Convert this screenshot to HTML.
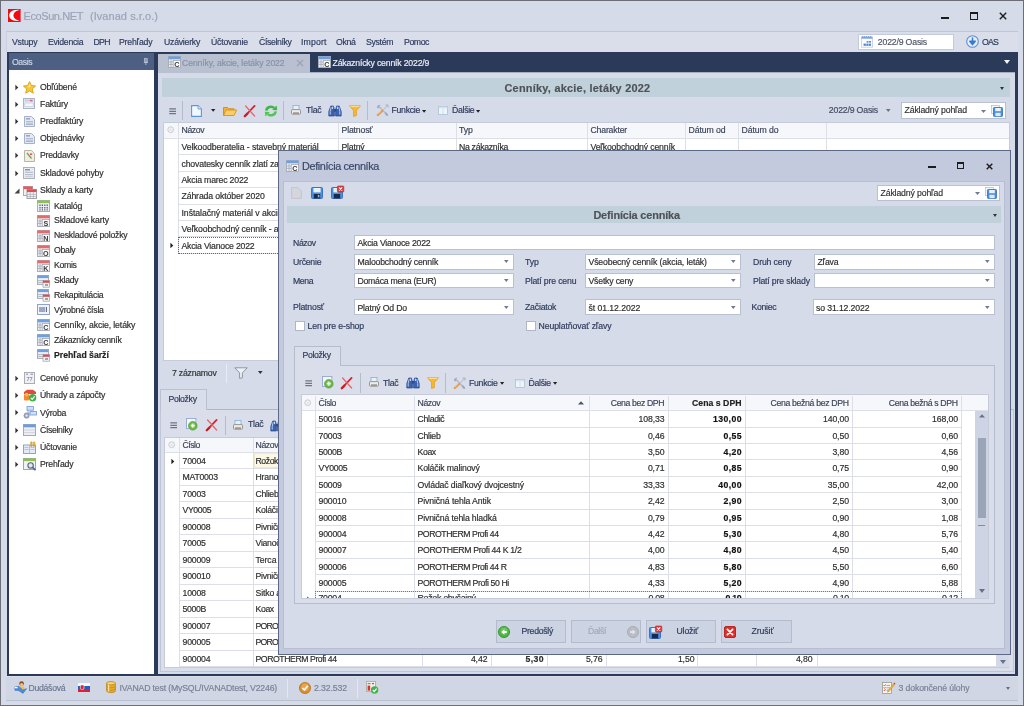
<!DOCTYPE html>
<html><head><meta charset="utf-8"><title>EcoSun.NET</title>
<style>
html,body{margin:0;padding:0;background:#d5dbe8;}
body{width:1024px;height:706px;overflow:hidden;font-family:"Liberation Sans",sans-serif;}
#w{filter:blur(0.35px);position:relative;width:1024px;height:706px;overflow:hidden;background:#d5dbe8;font-size:8.8px;letter-spacing:-0.28px;color:#2e2e2e;}
.b{position:absolute;box-sizing:border-box;}
.t{position:absolute;white-space:pre;-webkit-text-stroke:0.18px;}
.i{position:absolute;overflow:visible;}
.bold{font-weight:bold;}
.hd{color:#3d4459;}
.in{background:#fff;border:1px solid #b9c0d1;}
.btn{background:#ccd3e3;border:1px solid #b3bbcc;}

</style></head><body>
<div id="w">
<div class="b " style="left:0px;top:0px;width:1024px;height:706px;border:1px solid #6d6e76;background:#d5dbe8"></div>
<svg class="i" style="left:8px;top:9px" width="13" height="13" viewBox="0 0 13 13"><rect x="0" y="0" width="12.6" height="13" fill="#f00a14"/><path d="M11.6 0.9 C4.5 0.2 0.9 3.6 1.1 6.6 C1.3 9.8 4.6 12.6 11.8 11.8 C7.6 10.8 5.4 9 5.4 6.4 C5.4 3.8 7.4 1.8 11.6 0.9Z" fill="#fff"/></svg>
<div class="t " style="left:23.5px;top:7.9px;font-size:11px;letter-spacing:-0.409px;height:16.2px;line-height:16.2px;color:#9ba3b7">EcoSun.NET</div>
<div class="t " style="left:90px;top:7.9px;font-size:11px;letter-spacing:0.05px;height:16.2px;line-height:16.2px;color:#9ba3b7">(Ivanad s.r.o.)</div>
<div class="b " style="left:941px;top:17px;width:8.4px;height:2.3px;background:#1c1c1c"></div>
<div class="b " style="left:969.5px;top:12px;width:8.5px;height:8px;border:1px solid #1c1c1c;border-top:2px solid #1c1c1c"></div>
<svg class="i" style="left:999px;top:12px" width="8" height="8" viewBox="0 0 8 8"><path d="M0.8 0.8L7.2 7.2M7.2 0.8L0.8 7.2" stroke="#1c1c1c" stroke-width="1.4"/></svg>
<div class="b " style="left:6px;top:31px;width:1012px;height:21px;background:#d9deea;border-top:1px solid #bfc6d4;border-left:1px solid #c9cfdc"></div>
<div class="t " style="left:12px;top:35.8px;font-size:8.7px;letter-spacing:-0.19px;height:12.8px;line-height:12.8px;color:#2f3b5c">Vstupy</div>
<div class="t " style="left:48px;top:35.8px;font-size:8.7px;letter-spacing:-0.27px;height:12.8px;line-height:12.8px;color:#2f3b5c">Evidencia</div>
<div class="t " style="left:93.5px;top:35.8px;font-size:8.7px;letter-spacing:-0.712px;height:12.8px;line-height:12.8px;color:#2f3b5c">DPH</div>
<div class="t " style="left:119px;top:35.8px;font-size:8.7px;letter-spacing:-0.201px;height:12.8px;line-height:12.8px;color:#2f3b5c">Prehľady</div>
<div class="t " style="left:164px;top:35.8px;font-size:8.7px;letter-spacing:-0.232px;height:12.8px;line-height:12.8px;color:#2f3b5c">Uzávierky</div>
<div class="t " style="left:211px;top:35.8px;font-size:8.7px;letter-spacing:-0.197px;height:12.8px;line-height:12.8px;color:#2f3b5c">Účtovanie</div>
<div class="t " style="left:259px;top:35.8px;font-size:8.7px;letter-spacing:-0.362px;height:12.8px;line-height:12.8px;color:#2f3b5c">Číselníky</div>
<div class="t " style="left:301px;top:35.8px;font-size:8.7px;letter-spacing:0.158px;height:12.8px;line-height:12.8px;color:#2f3b5c">Import</div>
<div class="t " style="left:336px;top:35.8px;font-size:8.7px;letter-spacing:-0.32px;height:12.8px;line-height:12.8px;color:#2f3b5c">Okná</div>
<div class="t " style="left:366px;top:35.8px;font-size:8.7px;letter-spacing:-0.286px;height:12.8px;line-height:12.8px;color:#2f3b5c">Systém</div>
<div class="t " style="left:404px;top:35.8px;font-size:8.7px;letter-spacing:-0.406px;height:12.8px;line-height:12.8px;color:#2f3b5c">Pomoc</div>
<div class="b " style="left:858px;top:34px;width:96px;height:16px;background:#fff;border:1px solid #c3cadb"></div>
<svg class="i" style="left:860.5px;top:35.6px" width="12" height="12" viewBox="0 0 12 12"><rect x="0.5" y="0.8" width="11" height="10.4" fill="#fbfcfe" stroke="#c3cbdc" stroke-width="0.8"/><rect x="0.6" y="1" width="10.8" height="1.7" fill="#7ea3e3"/><path d="M1 0.6H11" stroke="#5d86d0" stroke-width="0.7" stroke-dasharray="1.2 0.8"/><rect x="5.4" y="5" width="4.6" height="1.8" fill="#5f8de0"/><rect x="2.6" y="7.4" width="7.4" height="2.4" fill="#4f80d8"/><path d="M5.2 5V9.8M7.6 5V9.8M2.6 7.2H10" stroke="#fff" stroke-width="0.5"/></svg>
<div class="t " style="left:877.8px;top:35.6px;font-size:8.7px;letter-spacing:-0.166px;height:12.8px;line-height:12.8px;color:#4f566a">2022/9 Oasis</div>
<svg class="i" style="left:966px;top:35px" width="13" height="13" viewBox="0 0 13 13"><circle cx="6.5" cy="6.5" r="5.8" fill="#e4eefb" stroke="#5b8fd8" stroke-width="1.1"/><path d="M6.5 2.6V8M3.8 6.2L6.5 9.6L9.2 6.2Z" fill="#3d78cf" stroke="#3d78cf" stroke-width="1.5" stroke-linejoin="round"/></svg>
<div class="t " style="left:982px;top:35.6px;font-size:8.7px;letter-spacing:-0.824px;height:12.8px;line-height:12.8px;color:#2f3b5c">OAS</div>
<div class="b " style="left:7px;top:52px;width:1011px;height:624px;background:#2b3a58"></div>
<div class="b " style="left:9px;top:53px;width:145px;height:17px;background:#4d6084"></div>
<div class="t " style="left:12px;top:56.0px;font-size:8.7px;letter-spacing:-0.434px;height:12.8px;line-height:12.8px;color:#cdd5e6">Oasis</div>
<svg class="i" style="left:143px;top:58px" width="6" height="8" viewBox="0 0 6 8"><rect x="1.6" y="0.6" width="2.6" height="3.6" fill="#8f9cb8" stroke="#c5cde0" stroke-width="0.6"/><path d="M0.8 4.4H5M2.9 4.4V7" stroke="#c5cde0" stroke-width="0.8"/></svg>
<div class="b " style="left:9px;top:70px;width:145px;height:603.6px;background:#fff"></div>
<svg class="i" style="left:15px;top:83.5px" width="4" height="7" viewBox="0 0 4 7"><path d="M0.4 0.8 L3.3 3.5 L0.4 6.2Z" fill="#333"/></svg>
<svg class="i" style="left:23px;top:81px" width="13" height="13" viewBox="0 0 13 13"><path d="M6.5 0.6 L8.3 4.5 L12.6 5 L9.4 7.9 L10.3 12.2 L6.5 10 L2.7 12.2 L3.6 7.9 L0.4 5 L4.7 4.5Z" fill="#f6c736" stroke="#d9a014" stroke-width="0.9" stroke-linejoin="round"/><path d="M6.5 2.6 L7.6 5.2 L6.5 6.5 L4.2 5.6 L5.4 5.2Z" fill="#fde88a"/></svg>
<div class="t " style="left:40px;top:80.6px;font-size:8.7px;letter-spacing:-0.187px;height:12.8px;line-height:12.8px;">Obľúbené</div>
<svg class="i" style="left:15px;top:100.5px" width="4" height="7" viewBox="0 0 4 7"><path d="M0.4 0.8 L3.3 3.5 L0.4 6.2Z" fill="#333"/></svg>
<svg class="i" style="left:23px;top:98px" width="12" height="11" viewBox="0 0 12 11"><rect x="0.5" y="0.5" width="11" height="10" fill="#e9edf6" stroke="#a9b4cb"/><rect x="1.5" y="1.5" width="9" height="2" fill="#c5cde0"/><rect x="7" y="1.8" width="2.5" height="1.5" fill="#e06a6a"/><rect x="1.8" y="5" width="8.4" height="3.6" fill="#f7f8fc" stroke="#b5bfd3" stroke-width="0.6"/></svg>
<div class="t " style="left:40px;top:97.6px;font-size:8.7px;letter-spacing:-0.132px;height:12.8px;line-height:12.8px;">Faktúry</div>
<svg class="i" style="left:15px;top:117.8px" width="4" height="7" viewBox="0 0 4 7"><path d="M0.4 0.8 L3.3 3.5 L0.4 6.2Z" fill="#333"/></svg>
<svg class="i" style="left:24px;top:116px" width="11" height="11" viewBox="0 0 11 11"><path d="M0.5 0.5 H7.5 L10.5 3.5 V10.5 H0.5Z" fill="#e4e9f4" stroke="#a5b1c9"/><rect x="2" y="2" width="4" height="1.6" fill="#9aa6bf"/><rect x="2" y="5" width="7" height="1.4" fill="#b3bdd2"/><rect x="2" y="7.4" width="7" height="1.6" fill="#a9b5cd"/></svg>
<div class="t " style="left:40px;top:114.9px;font-size:8.7px;letter-spacing:-0.106px;height:12.8px;line-height:12.8px;">Predfaktúry</div>
<svg class="i" style="left:15px;top:135.2px" width="4" height="7" viewBox="0 0 4 7"><path d="M0.4 0.8 L3.3 3.5 L0.4 6.2Z" fill="#333"/></svg>
<svg class="i" style="left:24px;top:133px" width="11" height="11" viewBox="0 0 11 11"><path d="M0.5 0.5 H7.5 L10.5 3.5 V10.5 H0.5Z" fill="#e4e9f4" stroke="#a5b1c9"/><rect x="2" y="2" width="4" height="1.6" fill="#9aa6bf"/><rect x="2" y="5" width="7" height="1.4" fill="#b3bdd2"/><rect x="2" y="7.4" width="7" height="1.6" fill="#a9b5cd"/></svg>
<div class="t " style="left:40px;top:132.3px;font-size:8.7px;letter-spacing:-0.162px;height:12.8px;line-height:12.8px;">Objednávky</div>
<svg class="i" style="left:15px;top:152.3px" width="4" height="7" viewBox="0 0 4 7"><path d="M0.4 0.8 L3.3 3.5 L0.4 6.2Z" fill="#333"/></svg>
<svg class="i" style="left:24px;top:150px" width="11" height="12" viewBox="0 0 11 12"><path d="M0.5 0.5 H7.5 L10.5 3.5 V11.5 H0.5Z" fill="#efeee2" stroke="#b9b7a4"/><path d="M3 3 L7.5 8.5" stroke="#7d9a63" stroke-width="1.3"/><rect x="6" y="3.4" width="2.2" height="1.6" fill="#e05858"/></svg>
<div class="t " style="left:40px;top:149.4px;font-size:8.7px;letter-spacing:-0.246px;height:12.8px;line-height:12.8px;">Preddavky</div>
<svg class="i" style="left:15px;top:169.5px" width="4" height="7" viewBox="0 0 4 7"><path d="M0.4 0.8 L3.3 3.5 L0.4 6.2Z" fill="#333"/></svg>
<svg class="i" style="left:23px;top:167px" width="12" height="12" viewBox="0 0 12 12"><rect x="0.5" y="0.5" width="11" height="11" fill="#e9ebf0" stroke="#aab0bd"/><rect x="2" y="2" width="5" height="1.5" fill="#8e96a8"/><rect x="2" y="4.7" width="8" height="1.2" fill="#b9bfcc"/><rect x="2" y="7" width="8" height="1.2" fill="#b9bfcc"/><rect x="2" y="9.2" width="8" height="1" fill="#c5cad5"/></svg>
<div class="t " style="left:40px;top:166.6px;font-size:8.7px;letter-spacing:-0.186px;height:12.8px;line-height:12.8px;">Skladové pohyby</div>
<svg class="i" style="left:14px;top:188px" width="6" height="6" viewBox="0 0 6 6"><path d="M5.5 0.5 L5.5 5.5 L0.5 5.5Z" fill="#444"/></svg>
<svg class="i" style="left:23px;top:185.5px" width="14" height="13" viewBox="0 0 14 13"><rect x="0.5" y="0.5" width="9" height="9" fill="#eef0f4" stroke="#a8acb6"/><rect x="0.5" y="0.5" width="9" height="2.6" fill="#e05b5b"/><rect x="4" y="3.5" width="9.5" height="9" fill="#f2f3f6" stroke="#9ea3ad"/><rect x="4" y="3.5" width="9.5" height="2.6" fill="#dd5050"/><path d="M4 8.4H13.5M4 10.5H13.5M7.2 6.1V12.5M10.4 6.1V12.5" stroke="#a8adb8" stroke-width="0.7"/></svg>
<div class="t " style="left:40px;top:184.0px;font-size:8.7px;letter-spacing:-0.111px;height:12.8px;line-height:12.8px;">Sklady a karty</div>
<svg class="i" style="left:37px;top:200px" width="13" height="12" viewBox="0 0 13 12"><rect x="0.5" y="0.5" width="12" height="11" fill="#eceef3" stroke="#a9aeb9"/><rect x="0.5" y="0.5" width="12" height="2.6" fill="#8cc152"/><path d="M3 4.5V10.5M5.4 4.5V10.5M7.8 4.5V10.5M10.2 4.5V10.5" stroke="#555b69" stroke-width="1.2" stroke-dasharray="1.6 0.8"/></svg>
<div class="t " style="left:54px;top:199.6px;font-size:8.7px;letter-spacing:-0.2px;height:12.8px;line-height:12.8px;">Katalóg</div>
<svg class="i" style="left:37px;top:214.8px" width="13" height="12" viewBox="0 0 13 12"><rect x="0.5" y="0.5" width="12" height="11" fill="#eceef3" stroke="#a9aeb9"/><rect x="0.5" y="0.5" width="12" height="2.8" fill="#e36a6a"/><path d="M1 6H5M1 8.4H5M3 3.5V11" stroke="#a3a8b4" stroke-width="0.8"/><rect x="5.2" y="4.6" width="7.3" height="7" fill="#fafafa" stroke="#9b9fa8" stroke-width="0.7"/><text x="8.9" y="10.8" font-family="Liberation Sans" font-weight="bold" font-size="7.2" text-anchor="middle" fill="#3a3a3a" letter-spacing="0">S</text></svg>
<div class="t " style="left:54px;top:214.4px;font-size:8.7px;letter-spacing:-0.143px;height:12.8px;line-height:12.8px;">Skladové karty</div>
<svg class="i" style="left:37px;top:229.6px" width="13" height="12" viewBox="0 0 13 12"><rect x="0.5" y="0.5" width="12" height="11" fill="#eceef3" stroke="#a9aeb9"/><rect x="0.5" y="0.5" width="12" height="2.8" fill="#e36a6a"/><path d="M1 6H5M1 8.4H5M3 3.5V11" stroke="#a3a8b4" stroke-width="0.8"/><rect x="5.2" y="4.6" width="7.3" height="7" fill="#fafafa" stroke="#9b9fa8" stroke-width="0.7"/><text x="8.9" y="10.8" font-family="Liberation Sans" font-weight="bold" font-size="7.2" text-anchor="middle" fill="#3a3a3a" letter-spacing="0">N</text></svg>
<div class="t " style="left:54px;top:229.2px;font-size:8.7px;letter-spacing:-0.21px;height:12.8px;line-height:12.8px;">Neskladové položky</div>
<svg class="i" style="left:37px;top:244.6px" width="13" height="12" viewBox="0 0 13 12"><rect x="0.5" y="0.5" width="12" height="11" fill="#eceef3" stroke="#a9aeb9"/><rect x="0.5" y="0.5" width="12" height="2.8" fill="#e36a6a"/><path d="M1 6H5M1 8.4H5M3 3.5V11" stroke="#a3a8b4" stroke-width="0.8"/><rect x="5.2" y="4.6" width="7.3" height="7" fill="#fafafa" stroke="#9b9fa8" stroke-width="0.7"/><text x="8.9" y="10.8" font-family="Liberation Sans" font-weight="bold" font-size="7.2" text-anchor="middle" fill="#3a3a3a" letter-spacing="0">O</text></svg>
<div class="t " style="left:54px;top:244.2px;font-size:8.7px;letter-spacing:-0.26px;height:12.8px;line-height:12.8px;">Obaly</div>
<svg class="i" style="left:37px;top:259.6px" width="13" height="12" viewBox="0 0 13 12"><rect x="0.5" y="0.5" width="12" height="11" fill="#eceef3" stroke="#a9aeb9"/><rect x="0.5" y="0.5" width="12" height="2.8" fill="#e36a6a"/><path d="M1 6H5M1 8.4H5M3 3.5V11" stroke="#a3a8b4" stroke-width="0.8"/><rect x="5.2" y="4.6" width="7.3" height="7" fill="#fafafa" stroke="#9b9fa8" stroke-width="0.7"/><text x="8.9" y="10.8" font-family="Liberation Sans" font-weight="bold" font-size="7.2" text-anchor="middle" fill="#3a3a3a" letter-spacing="0">K</text></svg>
<div class="t " style="left:54px;top:259.2px;font-size:8.7px;letter-spacing:-0.323px;height:12.8px;line-height:12.8px;">Komis</div>
<svg class="i" style="left:37px;top:274.5px" width="13" height="13" viewBox="0 0 13 13"><rect x="0.5" y="0.5" width="11" height="9" fill="#eceef3" stroke="#a9aeb9"/><rect x="0.5" y="0.5" width="11" height="2.6" fill="#6f9fe0"/><path d="M1 5.6H6M1 7.6H6" stroke="#a3a8b4" stroke-width="0.8"/><rect x="6" y="5.6" width="6.5" height="6.6" fill="#f4f4f6" stroke="#9b9fa8" stroke-width="0.7"/><rect x="6" y="5.6" width="6.5" height="2.2" fill="#d94c4c"/><rect x="8" y="9" width="3" height="2" fill="#9ea3ad"/></svg>
<div class="t " style="left:54px;top:274.1px;font-size:8.7px;letter-spacing:-0.288px;height:12.8px;line-height:12.8px;">Sklady</div>
<svg class="i" style="left:37px;top:289.3px" width="13" height="13" viewBox="0 0 13 13"><rect x="0.5" y="0.5" width="11" height="9" fill="#eceef3" stroke="#a9aeb9"/><rect x="0.5" y="0.5" width="11" height="2.6" fill="#6f9fe0"/><path d="M1 5.6H6M1 7.6H6" stroke="#a3a8b4" stroke-width="0.8"/><rect x="6" y="5.6" width="6.5" height="6.6" fill="#f4f4f6" stroke="#9b9fa8" stroke-width="0.7"/><rect x="6" y="5.6" width="6.5" height="2.2" fill="#d94c4c"/><rect x="8" y="9" width="3" height="2" fill="#9ea3ad"/></svg>
<div class="t " style="left:54px;top:288.9px;font-size:8.7px;letter-spacing:-0.205px;height:12.8px;line-height:12.8px;">Rekapitulácia</div>
<svg class="i" style="left:37px;top:304.2px" width="13" height="11" viewBox="0 0 13 11"><rect x="0.5" y="0.5" width="12" height="10" fill="#f2f4fa" stroke="#8fa3cf"/><path d="M3 3V8M5 3V8M7 3V8M9.4 3V8" stroke="#5a6a94" stroke-width="1.1"/></svg>
<div class="t " style="left:54px;top:303.8px;font-size:8.7px;letter-spacing:-0.226px;height:12.8px;line-height:12.8px;">Výrobné čísla</div>
<svg class="i" style="left:37px;top:319px" width="13" height="12" viewBox="0 0 13 12"><rect x="0.5" y="0.5" width="12" height="11" fill="#eceef3" stroke="#a9aeb9"/><rect x="0.5" y="0.5" width="12" height="2.8" fill="#6f9fe0"/><path d="M1 6H5M1 8.4H5M3 3.5V11" stroke="#a3a8b4" stroke-width="0.8"/><rect x="5.2" y="4.6" width="7.3" height="7" fill="#fafafa" stroke="#9b9fa8" stroke-width="0.7"/><text x="8.9" y="10.8" font-family="Liberation Sans" font-weight="bold" font-size="7.2" text-anchor="middle" fill="#3a3a3a" letter-spacing="0">C</text></svg>
<div class="t " style="left:54px;top:318.6px;font-size:8.7px;letter-spacing:-0.116px;height:12.8px;line-height:12.8px;">Cenníky, akcie, letáky</div>
<svg class="i" style="left:37px;top:334px" width="13" height="12" viewBox="0 0 13 12"><rect x="0.5" y="0.5" width="12" height="11" fill="#eceef3" stroke="#a9aeb9"/><rect x="0.5" y="0.5" width="12" height="2.8" fill="#6f9fe0"/><path d="M1 6H5M1 8.4H5M3 3.5V11" stroke="#a3a8b4" stroke-width="0.8"/><rect x="5.2" y="4.6" width="7.3" height="7" fill="#fafafa" stroke="#9b9fa8" stroke-width="0.7"/><text x="8.9" y="10.8" font-family="Liberation Sans" font-weight="bold" font-size="7.2" text-anchor="middle" fill="#3a3a3a" letter-spacing="0">C</text></svg>
<div class="t " style="left:54px;top:333.6px;font-size:8.7px;letter-spacing:-0.257px;height:12.8px;line-height:12.8px;">Zákaznícky cenník</div>
<svg class="i" style="left:37px;top:349px" width="13" height="13" viewBox="0 0 13 13"><rect x="0.5" y="0.5" width="11" height="9" fill="#eceef3" stroke="#a9aeb9"/><rect x="0.5" y="0.5" width="11" height="2.6" fill="#6f9fe0"/><path d="M1 5.6H6M1 7.6H6" stroke="#a3a8b4" stroke-width="0.8"/><rect x="6" y="5.6" width="6.5" height="6.6" fill="#f4f4f6" stroke="#9b9fa8" stroke-width="0.7"/><rect x="6" y="5.6" width="6.5" height="2.2" fill="#d94c4c"/><rect x="8" y="9" width="3" height="2" fill="#9ea3ad"/></svg>
<div class="t bold" style="left:54px;top:348.6px;font-size:8.7px;letter-spacing:-0.018px;height:12.8px;line-height:12.8px;color:#222">Prehľad šarží</div>
<svg class="i" style="left:15px;top:375.0px" width="4" height="7" viewBox="0 0 4 7"><path d="M0.4 0.8 L3.3 3.5 L0.4 6.2Z" fill="#333"/></svg>
<svg class="i" style="left:24px;top:372.0px" width="11" height="12" viewBox="0 0 11 12"><rect x="0.5" y="0.5" width="10" height="11" fill="#eef0f3" stroke="#a8adb8"/><path d="M2 2.2H4M6.5 2.2H9" stroke="#888e9b" stroke-width="1"/><text x="5.5" y="9.4" font-family="Liberation Sans" font-size="5.6" text-anchor="middle" fill="#666c79" letter-spacing="0">77</text></svg>
<div class="t " style="left:40px;top:372.1px;font-size:8.7px;letter-spacing:-0.209px;height:12.8px;line-height:12.8px;">Cenové ponuky</div>
<svg class="i" style="left:15px;top:392.3px" width="4" height="7" viewBox="0 0 4 7"><path d="M0.4 0.8 L3.3 3.5 L0.4 6.2Z" fill="#333"/></svg>
<svg class="i" style="left:23px;top:389.3px" width="14" height="13" viewBox="0 0 14 13"><path d="M1 3 L4 0.8 H10 L13 3 V5 H1Z" fill="#e24a3b"/><rect x="1" y="5" width="5" height="6.5" rx="1" fill="#f08b2d"/><circle cx="3.5" cy="5.6" r="1.8" fill="#f7b15c"/><circle cx="9.6" cy="8.8" r="3.7" fill="#3fae49"/><path d="M7.8 8.8 L9.2 10.3 L11.6 7.4" stroke="#fff" stroke-width="1.2" fill="none"/></svg>
<div class="t " style="left:40px;top:389.4px;font-size:8.7px;letter-spacing:-0.15px;height:12.8px;line-height:12.8px;">Úhrady a zápočty</div>
<svg class="i" style="left:15px;top:409.4px" width="4" height="7" viewBox="0 0 4 7"><path d="M0.4 0.8 L3.3 3.5 L0.4 6.2Z" fill="#333"/></svg>
<svg class="i" style="left:23px;top:406.4px" width="14" height="13" viewBox="0 0 14 13"><rect x="4" y="0.6" width="6.5" height="3.6" fill="#cfe0f7" stroke="#6f98d4" stroke-width="0.8"/><rect x="7" y="5.4" width="6.5" height="3.6" fill="#cfe0f7" stroke="#6f98d4" stroke-width="0.8"/><path d="M5 4.2V7.2H7" stroke="#7f96bd" stroke-width="0.8" fill="none"/><circle cx="3.6" cy="9.6" r="2.6" fill="#aab3c8" stroke="#7c87a3" stroke-width="0.8"/><circle cx="3.6" cy="9.6" r="0.9" fill="#eef0f6"/></svg>
<div class="t " style="left:40px;top:406.5px;font-size:8.7px;letter-spacing:-0.223px;height:12.8px;line-height:12.8px;">Výroba</div>
<svg class="i" style="left:15px;top:426.6px" width="4" height="7" viewBox="0 0 4 7"><path d="M0.4 0.8 L3.3 3.5 L0.4 6.2Z" fill="#333"/></svg>
<svg class="i" style="left:23px;top:423.6px" width="13" height="12" viewBox="0 0 13 12"><rect x="0.5" y="0.5" width="12" height="11" fill="#eeeff3" stroke="#a4a9b5"/><rect x="0.5" y="0.5" width="12" height="2.8" fill="#6d9be0"/><path d="M1 6H12M1 8.6H12" stroke="#c9ccd5" stroke-width="0.8"/></svg>
<div class="t " style="left:40px;top:423.7px;font-size:8.7px;letter-spacing:-0.362px;height:12.8px;line-height:12.8px;">Číselníky</div>
<svg class="i" style="left:15px;top:443.8px" width="4" height="7" viewBox="0 0 4 7"><path d="M0.4 0.8 L3.3 3.5 L0.4 6.2Z" fill="#333"/></svg>
<svg class="i" style="left:23px;top:440.8px" width="14" height="13" viewBox="0 0 14 13"><rect x="0.5" y="4" width="12" height="8.5" fill="#e4eaf6" stroke="#8ea2cc"/><path d="M6.5 4V12.5M1.5 6.5H5.5M1.5 8.5H5.5M7.5 6.5H11.5M7.5 8.5H11.5" stroke="#9fb0d3" stroke-width="0.7"/><path d="M8.3 0.5V6M11 0.5V6M6.8 2H12.6M6.8 4.4H12.6" stroke="#e3a21a" stroke-width="1.2"/></svg>
<div class="t " style="left:40px;top:440.9px;font-size:8.7px;letter-spacing:-0.197px;height:12.8px;line-height:12.8px;">Účtovanie</div>
<svg class="i" style="left:15px;top:461.0px" width="4" height="7" viewBox="0 0 4 7"><path d="M0.4 0.8 L3.3 3.5 L0.4 6.2Z" fill="#333"/></svg>
<svg class="i" style="left:23px;top:458.0px" width="14" height="13" viewBox="0 0 14 13"><rect x="0.5" y="0.5" width="12" height="11" fill="#f1f2f5" stroke="#9fa4ae"/><rect x="0.5" y="0.5" width="12" height="2.6" fill="#8cc152"/><circle cx="7.6" cy="7.4" r="2.7" fill="#dfe6f2" stroke="#5b6473" stroke-width="1.1"/><path d="M9.6 9.4L12.4 12.2" stroke="#3b63b5" stroke-width="1.6"/></svg>
<div class="t " style="left:40px;top:458.1px;font-size:8.7px;letter-spacing:-0.201px;height:12.8px;line-height:12.8px;">Prehľady</div>
<div class="b " style="left:158px;top:72px;width:857.4px;height:601.6px;background:#d5dbe8"></div>
<div class="b " style="left:158px;top:72px;width:857.4px;height:1px;background:#a5aebe"></div>
<div class="b " style="left:158px;top:53.6px;width:152px;height:19.4px;background:#b9c1d0"></div>
<svg class="i" style="left:167.5px;top:56.3px" width="13" height="12" viewBox="0 0 13 12"><rect x="0.5" y="0.5" width="12" height="11" fill="#eceef3" stroke="#a9aeb9"/><rect x="0.5" y="0.5" width="12" height="2.8" fill="#6f9fe0"/><path d="M1 6H5M1 8.4H5M3 3.5V11" stroke="#a3a8b4" stroke-width="0.8"/><rect x="5.2" y="4.6" width="7.3" height="7" fill="#fafafa" stroke="#9b9fa8" stroke-width="0.7"/><text x="8.9" y="10.8" font-family="Liberation Sans" font-weight="bold" font-size="7.2" text-anchor="middle" fill="#3a3a3a" letter-spacing="0">C</text></svg>
<div class="t " style="left:182px;top:56.8px;font-size:8.7px;letter-spacing:-0.113px;height:12.8px;line-height:12.8px;color:#8691ac">Cenníky, akcie, letáky 2022</div>
<svg class="i" style="left:296px;top:59px" width="8" height="8" viewBox="0 0 8 8"><path d="M1 1L7 7M7 1L1 7" stroke="#9aa2b5" stroke-width="1.2"/></svg>
<svg class="i" style="left:318px;top:56px" width="13" height="12" viewBox="0 0 13 12"><rect x="0.5" y="0.5" width="12" height="11" fill="#eceef3" stroke="#a9aeb9"/><rect x="0.5" y="0.5" width="12" height="2.8" fill="#6f9fe0"/><path d="M1 6H5M1 8.4H5M3 3.5V11" stroke="#a3a8b4" stroke-width="0.8"/><rect x="5.2" y="4.6" width="7.3" height="7" fill="#fafafa" stroke="#9b9fa8" stroke-width="0.7"/><text x="8.9" y="10.8" font-family="Liberation Sans" font-weight="bold" font-size="7.2" text-anchor="middle" fill="#3a3a3a" letter-spacing="0">C</text></svg>
<div class="t " style="left:332.5px;top:56.8px;font-size:8.7px;letter-spacing:-0.175px;height:12.8px;line-height:12.8px;color:#eceff5">Zákaznícky cenník 2022/9</div>
<svg class="i" style="left:1004px;top:60px" width="6" height="4" viewBox="0 0 6 4"><path d="M0 0 L6 0 L3.0 4Z" fill="#f4f6fa"/></svg>
<div class="b " style="left:162px;top:78px;width:848px;height:19px;background:#c0d1db"></div>
<div class="t " style="left:504.5px;top:80.3px;font-size:10.9px;letter-spacing:0.253px;height:16.0px;line-height:16.0px;color:#4e5257;font-weight:bold">Cenníky, akcie, letáky 2022</div>
<svg class="i" style="left:1000px;top:87px" width="4" height="3" viewBox="0 0 4 3"><path d="M0 0 L4 0 L2.0 3Z" fill="#333"/></svg>
<svg class="i" style="left:168.5px;top:107.5px" width="8" height="7" viewBox="0 0 8 7"><path d="M0.3 0.9H7M0.3 3.3H7M0.3 5.7H7" stroke="#474e60" stroke-width="0.9"/></svg>
<div class="b " style="left:182px;top:101px;width:1px;height:19px;background:#b4bbcb"></div>
<svg class="i" style="left:191px;top:104.5px" width="11" height="12" viewBox="0 0 11 12"><path d="M0.6 0.6 H7 L10.4 4 V11.4 H0.6Z" fill="#f3f8fe" stroke="#5d96dc" stroke-width="1.1"/><path d="M7 0.6V4H10.4" fill="#d4e5f9" stroke="#5d96dc" stroke-width="0.8"/></svg>
<svg class="i" style="left:210.8px;top:109.3px" width="4.4" height="2.8" viewBox="0 0 4.4 2.8"><path d="M0 0 L4.4 0 L2.2 2.8Z" fill="#222"/></svg>
<svg class="i" style="left:222.5px;top:105.5px" width="14" height="10" viewBox="0 0 14 10"><path d="M0.5 9.5 V1.5 H4.5 L5.8 2.8 H11 V4" fill="#f1b23d" stroke="#d18a13" stroke-width="0.9"/><path d="M0.6 9.5 L3 4 H13.6 L11 9.5Z" fill="#f9cd6b" stroke="#d9921b" stroke-width="0.9"/></svg>
<svg class="i" style="left:243.5px;top:104.5px" width="12" height="12" viewBox="0 0 12 12"><path d="M1 11 L10.6 0.9" stroke="#d8232a" stroke-width="1.8" stroke-linecap="round"/><path d="M0.8 11.2 L3.4 8.6" stroke="#cf1c23" stroke-width="2.3" stroke-linecap="round"/><path d="M1.6 1 L10.6 11" stroke="#e4646a" stroke-width="1.2" stroke-linecap="round"/></svg>
<svg class="i" style="left:263.5px;top:104.5px" width="14" height="12" viewBox="0 0 14 12"><path d="M2.3 5.6 A4.7 4.3 0 0 1 10.2 2.9" stroke="#3fb544" stroke-width="2.5" fill="none"/><path d="M8.2 4.9 L13.2 5.3 L12.6 0.4Z" fill="#3fb544"/><path d="M11.7 6.4 A4.7 4.3 0 0 1 3.8 9.1" stroke="#52c556" stroke-width="2.5" fill="none"/><path d="M5.8 7.1 L0.8 6.7 L1.4 11.6Z" fill="#52c556"/></svg>
<div class="b " style="left:283px;top:101px;width:1px;height:19px;background:#b4bbcb"></div>
<svg class="i" style="left:291px;top:105px" width="10" height="10" viewBox="0 0 10 10"><rect x="2" y="0.5" width="6" height="5" fill="#e6f0fb" stroke="#86aede" stroke-width="0.8"/><rect x="0.5" y="4.6" width="9" height="4.6" rx="0.8" fill="#ecebe6" stroke="#8f8d86" stroke-width="0.9"/><rect x="2" y="7.5" width="6" height="1.1" fill="#77756f"/></svg>
<div class="t " style="left:306px;top:103.9px;font-size:8.7px;letter-spacing:-0.274px;height:12.8px;line-height:12.8px;color:#2f3b5c">Tlač</div>
<svg class="i" style="left:328px;top:104.5px" width="14" height="12" viewBox="0 0 14 12"><path d="M0.8 11 V6.4 L2.8 1 H5.4 L6.4 4.8 V11Z" fill="#3a64b0" stroke="#27478c" stroke-width="0.7"/><path d="M13.2 11 V6.4 L11.2 1 H8.6 L7.6 4.8 V11Z" fill="#3a64b0" stroke="#27478c" stroke-width="0.7"/><rect x="5.8" y="4" width="2.4" height="2.6" fill="#2b4d95"/><path d="M3.2 2.2 L2.2 6.4 V9.6M10.8 2.2 L11.8 6.4 V9.6" stroke="#b9cdf0" stroke-width="1" fill="none"/><path d="M4.6 1.6V4M9.4 1.6V4" stroke="#e8effb" stroke-width="0.9"/></svg>
<svg class="i" style="left:349px;top:104.5px" width="12" height="12" viewBox="0 0 12 12"><path d="M0.6 0.8 H11.4 L7.4 5.6 V10.6 L4.6 11.4 V5.6Z" fill="#f9b732" stroke="#e59a1a" stroke-width="0.8" stroke-linejoin="round"/><path d="M1.6 1.4H10.4" stroke="#fde29a" stroke-width="1"/></svg>
<div class="b " style="left:367px;top:101px;width:1px;height:19px;background:#b4bbcb"></div>
<svg class="i" style="left:375.5px;top:104px" width="13" height="12" viewBox="0 0 13 12"><path d="M3.8 3.2 L10.4 10" stroke="#b3bbca" stroke-width="1.4" stroke-linecap="round"/><path d="M0.9 3.6 A2.8 2.8 0 0 1 4.4 0.8 L3.2 2.4 L4.2 3.6 L1.9 4.4Z" fill="#a4adbf"/><path d="M11.2 1.6 L6.4 6.8" stroke="#bcc3d1" stroke-width="1.1"/><path d="M6.2 7 L1.8 11" stroke="#ee9a3e" stroke-width="2.3" stroke-linecap="round"/><path d="M4.6 7.6 L2.4 9.6" stroke="#f7c58a" stroke-width="0.8" stroke-linecap="round"/><path d="M9.6 1 L12 1 L12 3.4" stroke="#a4adbf" stroke-width="1" fill="none"/><path d="M9.6 9.2 L11.2 11" stroke="#9fa8bb" stroke-width="1.9" stroke-linecap="round"/></svg>
<div class="t " style="left:391.5px;top:103.9px;font-size:8.7px;letter-spacing:-0.27px;height:12.8px;line-height:12.8px;color:#2f3b5c">Funkcie</div>
<svg class="i" style="left:422.3px;top:109.7px" width="4.2" height="2.7" viewBox="0 0 4.2 2.7"><path d="M0 0 L4.2 0 L2.1 2.7Z" fill="#222"/></svg>
<svg class="i" style="left:437.5px;top:106px" width="10" height="9" viewBox="0 0 10 9"><rect x="0.5" y="0.5" width="9" height="8" fill="#edf4fa" stroke="#adc0d6" stroke-width="0.8"/><rect x="0.8" y="0.8" width="8.4" height="1.4" fill="#d3e0ee"/><path d="M5 2.4V8" stroke="#c9d7e6" stroke-width="0.7"/></svg>
<div class="t " style="left:452px;top:103.9px;font-size:8.7px;letter-spacing:-0.288px;height:12.8px;line-height:12.8px;color:#2f3b5c">Ďalšie</div>
<svg class="i" style="left:476.3px;top:109.7px" width="4.2" height="2.7" viewBox="0 0 4.2 2.7"><path d="M0 0 L4.2 0 L2.1 2.7Z" fill="#222"/></svg>
<div class="t " style="left:828.8px;top:104.1px;font-size:8.7px;letter-spacing:-0.166px;height:12.8px;line-height:12.8px;color:#454c60">2022/9 Oasis</div>
<svg class="i" style="left:886.4px;top:109px" width="4.6" height="3" viewBox="0 0 4.6 3"><path d="M0 0 L4.6 0 L2.3 3Z" fill="#6b7385"/></svg>
<div class="b in" style="left:901px;top:102px;width:105px;height:17px;"></div>
<div class="t " style="left:904.5px;top:104.1px;font-size:8.7px;letter-spacing:-0.131px;height:12.8px;line-height:12.8px;color:#333">Základný pohľad</div>
<svg class="i" style="left:981px;top:109.5px" width="5" height="3" viewBox="0 0 5 3"><path d="M0 0 L5 0 L2.5 3Z" fill="#717990"/></svg>
<svg class="i" style="left:991px;top:104.5px" width="12" height="12" viewBox="0 0 12 12"><rect x="0.3" y="0.3" width="8" height="8" fill="#f3f6fb" stroke="#9fb2d2" stroke-width="0.6"/><rect x="2.5" y="2.5" width="9" height="9" rx="0.8" fill="#4a8fe0" stroke="#2f6dc0" stroke-width="0.8"/><rect x="4.2" y="3" width="5.6" height="3.2" fill="#e9f1fb"/><rect x="4.4" y="7.8" width="5.2" height="3.4" fill="#dfe9f7"/></svg>
<div class="b " style="left:163px;top:122px;width:847px;height:239px;background:#fff;border:1px solid #c5cbd9"></div>
<div class="b " style="left:164px;top:123px;width:845px;height:15.5px;background:#f5f7fb;border-bottom:1px solid #dddfe8"></div>
<svg class="i" style="left:166.5px;top:126px" width="8" height="8" viewBox="0 0 8 8"><circle cx="3.7" cy="3.7" r="2.9" fill="#f2f3f6" stroke="#c8cbd3" stroke-width="1"/><circle cx="3.7" cy="3.7" r="1" fill="#dcdee5"/></svg>
<div class="b " style="left:178px;top:123px;width:1px;height:15px;background:#dddfe8"></div>
<div class="t hd" style="left:181.5px;top:123.9px;font-size:8.7px;letter-spacing:-0.367px;height:12.8px;line-height:12.8px;">Názov</div>
<div class="b " style="left:338px;top:123px;width:1px;height:15px;background:#dddfe8"></div>
<div class="t hd" style="left:341.5px;top:123.9px;font-size:8.7px;letter-spacing:-0.167px;height:12.8px;line-height:12.8px;">Platnosť</div>
<div class="b " style="left:455.5px;top:123px;width:1px;height:15px;background:#dddfe8"></div>
<div class="t hd" style="left:459.0px;top:123.9px;font-size:8.7px;letter-spacing:-0.028px;height:12.8px;line-height:12.8px;">Typ</div>
<div class="b " style="left:587px;top:123px;width:1px;height:15px;background:#dddfe8"></div>
<div class="t hd" style="left:590.5px;top:123.9px;font-size:8.7px;letter-spacing:-0.183px;height:12.8px;line-height:12.8px;">Charakter</div>
<div class="b " style="left:685px;top:123px;width:1px;height:15px;background:#dddfe8"></div>
<div class="t hd" style="left:688.5px;top:123.9px;font-size:8.7px;letter-spacing:-0.085px;height:12.8px;line-height:12.8px;">Dátum od</div>
<div class="b " style="left:738px;top:123px;width:1px;height:15px;background:#dddfe8"></div>
<div class="t hd" style="left:741.5px;top:123.9px;font-size:8.7px;letter-spacing:-0.085px;height:12.8px;line-height:12.8px;">Dátum do</div>
<div class="b " style="left:825.5px;top:123px;width:1px;height:15px;background:#dddfe8"></div>
<div class="b " style="left:178px;top:154.3px;width:831px;height:1px;background:#dddfe8"></div>
<div class="t " style="left:181.5px;top:141.1px;font-size:8.7px;letter-spacing:-0.082px;height:12.8px;line-height:12.8px;">Velkoodberatelia - stavebný materiál</div>
<div class="t " style="left:341.5px;top:141.1px;font-size:8.7px;letter-spacing:-0.2px;height:12.8px;line-height:12.8px;">Platný</div>
<div class="t " style="left:459.0px;top:141.1px;font-size:8.7px;letter-spacing:-0.306px;height:12.8px;line-height:12.8px;">Na zákazníka</div>
<div class="t " style="left:590.5px;top:141.1px;font-size:8.7px;letter-spacing:-0.158px;height:12.8px;line-height:12.8px;">Veľkoobchodný cenník</div>
<div class="b " style="left:178px;top:170.7px;width:831px;height:1px;background:#dddfe8"></div>
<div class="t " style="left:181.5px;top:157.5px;font-size:8.7px;letter-spacing:-0.159px;height:12.8px;line-height:12.8px;">chovatesky cenník zlatí zajaci</div>
<div class="b " style="left:178px;top:187.1px;width:831px;height:1px;background:#dddfe8"></div>
<div class="t " style="left:181.5px;top:173.9px;font-size:8.7px;letter-spacing:-0.177px;height:12.8px;line-height:12.8px;">Akcia marec 2022</div>
<div class="b " style="left:178px;top:203.5px;width:831px;height:1px;background:#dddfe8"></div>
<div class="t " style="left:181.5px;top:190.3px;font-size:8.7px;letter-spacing:-0.115px;height:12.8px;line-height:12.8px;">Záhrada október 2020</div>
<div class="b " style="left:178px;top:219.9px;width:831px;height:1px;background:#dddfe8"></div>
<div class="t " style="left:181.5px;top:206.7px;font-size:8.7px;letter-spacing:-0.054px;height:12.8px;line-height:12.8px;">Inštalačný materiál v akcii</div>
<div class="b " style="left:178px;top:236.3px;width:831px;height:1px;background:#dddfe8"></div>
<div class="t " style="left:181.5px;top:223.1px;font-size:8.7px;letter-spacing:-0.131px;height:12.8px;line-height:12.8px;">Veľkoobchodný cenník - akcia</div>
<div class="b " style="left:178px;top:252.7px;width:831px;height:1px;background:#dddfe8"></div>
<div class="t " style="left:181.5px;top:239.5px;font-size:8.7px;letter-spacing:-0.208px;height:12.8px;line-height:12.8px;">Akcia Vianoce 2022</div>
<div class="b " style="left:178px;top:138px;width:1px;height:115.6px;background:#dddfe8"></div>
<div class="b " style="left:338px;top:138px;width:1px;height:115.6px;background:#dddfe8"></div>
<div class="b " style="left:455.5px;top:138px;width:1px;height:115.6px;background:#dddfe8"></div>
<div class="b " style="left:587px;top:138px;width:1px;height:115.6px;background:#dddfe8"></div>
<div class="b " style="left:685px;top:138px;width:1px;height:115.6px;background:#dddfe8"></div>
<div class="b " style="left:738px;top:138px;width:1px;height:115.6px;background:#dddfe8"></div>
<div class="b " style="left:825.5px;top:138px;width:1px;height:115.6px;background:#dddfe8"></div>
<div class="b " style="left:178px;top:236.7px;width:832px;height:17.2px;border:1px dotted #666;border-right:none"></div>
<svg class="i" style="left:169.6px;top:241.8px" width="4" height="7" viewBox="0 0 4 7"><path d="M0.4 0.8 L3.3 3.5 L0.4 6.2Z" fill="#222"/></svg>
<div class="t " style="left:172px;top:366.6px;font-size:8.7px;letter-spacing:-0.227px;height:12.8px;line-height:12.8px;color:#333">7 záznamov</div>
<div class="b " style="left:226px;top:364px;width:1px;height:19px;background:#e9ecf4"></div>
<svg class="i" style="left:233.5px;top:366.8px" width="14" height="12" viewBox="0 0 14 12"><path d="M0.8 0.8 H13.2 L8.4 5.8 V10.8 L5.6 11.4 V5.8Z" fill="#eef0f5" stroke="#868d9d" stroke-width="0.9" stroke-linejoin="round"/></svg>
<svg class="i" style="left:258.4px;top:371.2px" width="4.6" height="3" viewBox="0 0 4.6 3"><path d="M0 0 L4.6 0 L2.3 3Z" fill="#333"/></svg>
<div class="b " style="left:160px;top:409px;width:854px;height:263px;background:#d9deea;border:1px solid #bfc6d6;border-top:1px solid #aeb6c8"></div>
<div class="b " style="left:160px;top:389px;width:47px;height:21px;background:#d9deea;border:1px solid #b9c0d0;border-bottom:none"></div>
<div class="t " style="left:168.5px;top:392.9px;font-size:8.7px;letter-spacing:-0.325px;height:12.8px;line-height:12.8px;color:#2f3b5c">Položky</div>
<svg class="i" style="left:170px;top:421.8px" width="8" height="7" viewBox="0 0 8 7"><path d="M0.3 0.9H7M0.3 3.3H7M0.3 5.7H7" stroke="#474e60" stroke-width="0.9"/></svg>
<svg class="i" style="left:186px;top:418px" width="13" height="13" viewBox="0 0 13 13"><rect x="0.5" y="0.5" width="9.4" height="10" fill="#f4f6fb" stroke="#93a8d3" stroke-width="0.9"/><circle cx="6.8" cy="7.8" r="4.3" fill="#6cb646" stroke="#55a033" stroke-width="0.7"/><circle cx="6.8" cy="7.6" r="2.3" fill="#a6d888"/><path d="M6.8 5.8V9.6M4.9 7.7H8.7" stroke="#fff" stroke-width="1"/></svg>
<svg class="i" style="left:206px;top:418.6px" width="12" height="12" viewBox="0 0 12 12"><path d="M1 11 L10.6 0.9" stroke="#d8232a" stroke-width="1.8" stroke-linecap="round"/><path d="M0.8 11.2 L3.4 8.6" stroke="#cf1c23" stroke-width="2.3" stroke-linecap="round"/><path d="M1.6 1 L10.6 11" stroke="#e4646a" stroke-width="1.2" stroke-linecap="round"/></svg>
<div class="b " style="left:225px;top:415.5px;width:1px;height:19.5px;background:#b4bbcb"></div>
<svg class="i" style="left:233px;top:419.6px" width="10" height="10" viewBox="0 0 10 10"><rect x="2" y="0.5" width="6" height="5" fill="#e6f0fb" stroke="#86aede" stroke-width="0.8"/><rect x="0.5" y="4.6" width="9" height="4.6" rx="0.8" fill="#ecebe6" stroke="#8f8d86" stroke-width="0.9"/><rect x="2" y="7.5" width="6" height="1.1" fill="#77756f"/></svg>
<div class="t " style="left:248px;top:418.4px;font-size:8.7px;letter-spacing:-0.274px;height:12.8px;line-height:12.8px;color:#2f3b5c">Tlač</div>
<svg class="i" style="left:270px;top:419.5px" width="14" height="12" viewBox="0 0 14 12"><path d="M0.8 11 V6.4 L2.8 1 H5.4 L6.4 4.8 V11Z" fill="#3a64b0" stroke="#27478c" stroke-width="0.7"/><path d="M13.2 11 V6.4 L11.2 1 H8.6 L7.6 4.8 V11Z" fill="#3a64b0" stroke="#27478c" stroke-width="0.7"/><rect x="5.8" y="4" width="2.4" height="2.6" fill="#2b4d95"/><path d="M3.2 2.2 L2.2 6.4 V9.6M10.8 2.2 L11.8 6.4 V9.6" stroke="#b9cdf0" stroke-width="1" fill="none"/><path d="M4.6 1.6V4M9.4 1.6V4" stroke="#e8effb" stroke-width="0.9"/></svg>
<div class="b " style="left:164px;top:436.5px;width:845px;height:231.5px;background:#fff;border:1px solid #c5cbd9"></div>
<div class="b " style="left:165px;top:437.5px;width:843px;height:15px;background:#f5f7fb;border-bottom:1px solid #dddfe8"></div>
<svg class="i" style="left:167.5px;top:441px" width="8" height="8" viewBox="0 0 8 8"><circle cx="3.7" cy="3.7" r="2.9" fill="#f2f3f6" stroke="#c8cbd3" stroke-width="1"/><circle cx="3.7" cy="3.7" r="1" fill="#dcdee5"/></svg>
<div class="t hd" style="left:182.5px;top:438.6px;font-size:8.7px;letter-spacing:-0.472px;height:12.8px;line-height:12.8px;">Číslo</div>
<div class="t hd" style="left:255.5px;top:438.6px;font-size:8.7px;letter-spacing:-0.367px;height:12.8px;line-height:12.8px;">Názov</div>
<div class="b " style="left:179px;top:468.2px;width:829px;height:1px;background:#dddfe8"></div>
<div class="b " style="left:253.5px;top:453.1px;width:168px;height:15.2px;background:#fdf8e3;border:1px solid #f0e9cc"></div>
<div class="t " style="left:182.5px;top:454.6px;font-size:8.7px;letter-spacing:-0.183px;height:12.8px;line-height:12.8px;">70004</div>
<div class="t " style="left:255.5px;top:454.6px;font-size:8.7px;letter-spacing:-0.415px;height:12.8px;line-height:12.8px;">Rožok</div>
<div class="b " style="left:179px;top:484.7px;width:829px;height:1px;background:#dddfe8"></div>
<div class="t " style="left:182.5px;top:471.1px;font-size:8.7px;letter-spacing:-0.255px;height:12.8px;line-height:12.8px;">MAT0003</div>
<div class="t " style="left:255.5px;top:471.1px;font-size:8.7px;letter-spacing:-0.202px;height:12.8px;line-height:12.8px;">Hrano</div>
<div class="b " style="left:179px;top:501.2px;width:829px;height:1px;background:#dddfe8"></div>
<div class="t " style="left:182.5px;top:487.6px;font-size:8.7px;letter-spacing:-0.183px;height:12.8px;line-height:12.8px;">70003</div>
<div class="t " style="left:255.5px;top:487.6px;font-size:8.7px;letter-spacing:-0.28px;height:12.8px;line-height:12.8px;">Chlieb</div>
<div class="b " style="left:179px;top:517.7px;width:829px;height:1px;background:#dddfe8"></div>
<div class="t " style="left:182.5px;top:504.1px;font-size:8.7px;letter-spacing:-0.39px;height:12.8px;line-height:12.8px;">VY0005</div>
<div class="t " style="left:255.5px;top:504.1px;font-size:8.7px;letter-spacing:-0.264px;height:12.8px;line-height:12.8px;">Koláčik</div>
<div class="b " style="left:179px;top:534.2px;width:829px;height:1px;background:#dddfe8"></div>
<div class="t " style="left:182.5px;top:520.6px;font-size:8.7px;letter-spacing:-0.183px;height:12.8px;line-height:12.8px;">900008</div>
<div class="t " style="left:255.5px;top:520.6px;font-size:8.7px;letter-spacing:-0.264px;height:12.8px;line-height:12.8px;">Pivničná</div>
<div class="b " style="left:179px;top:550.7px;width:829px;height:1px;background:#dddfe8"></div>
<div class="t " style="left:182.5px;top:537.1px;font-size:8.7px;letter-spacing:-0.183px;height:12.8px;line-height:12.8px;">70005</div>
<div class="t " style="left:255.5px;top:537.1px;font-size:8.7px;letter-spacing:-0.259px;height:12.8px;line-height:12.8px;">Vianočka</div>
<div class="b " style="left:179px;top:567.2px;width:829px;height:1px;background:#dddfe8"></div>
<div class="t " style="left:182.5px;top:553.6px;font-size:8.7px;letter-spacing:-0.183px;height:12.8px;line-height:12.8px;">900009</div>
<div class="t " style="left:255.5px;top:553.6px;font-size:8.7px;letter-spacing:-0.067px;height:12.8px;line-height:12.8px;">Terca</div>
<div class="b " style="left:179px;top:583.7px;width:829px;height:1px;background:#dddfe8"></div>
<div class="t " style="left:182.5px;top:570.1px;font-size:8.7px;letter-spacing:-0.183px;height:12.8px;line-height:12.8px;">900010</div>
<div class="t " style="left:255.5px;top:570.1px;font-size:8.7px;letter-spacing:-0.264px;height:12.8px;line-height:12.8px;">Pivničná</div>
<div class="b " style="left:179px;top:600.2px;width:829px;height:1px;background:#dddfe8"></div>
<div class="t " style="left:182.5px;top:586.6px;font-size:8.7px;letter-spacing:-0.183px;height:12.8px;line-height:12.8px;">10008</div>
<div class="t " style="left:255.5px;top:586.6px;font-size:8.7px;letter-spacing:-0.147px;height:12.8px;line-height:12.8px;">Sitko a</div>
<div class="b " style="left:179px;top:616.7px;width:829px;height:1px;background:#dddfe8"></div>
<div class="t " style="left:182.5px;top:603.1px;font-size:8.7px;letter-spacing:-0.303px;height:12.8px;line-height:12.8px;">5000B</div>
<div class="t " style="left:255.5px;top:603.1px;font-size:8.7px;letter-spacing:-0.373px;height:12.8px;line-height:12.8px;">Koax</div>
<div class="b " style="left:179px;top:633.2px;width:829px;height:1px;background:#dddfe8"></div>
<div class="t " style="left:182.5px;top:619.6px;font-size:8.7px;letter-spacing:-0.183px;height:12.8px;line-height:12.8px;">900007</div>
<div class="t " style="left:255.5px;top:619.6px;font-size:8.7px;letter-spacing:-0.789px;height:12.8px;line-height:12.8px;">POROTHERM</div>
<div class="b " style="left:179px;top:649.7px;width:829px;height:1px;background:#dddfe8"></div>
<div class="t " style="left:182.5px;top:636.1px;font-size:8.7px;letter-spacing:-0.183px;height:12.8px;line-height:12.8px;">900005</div>
<div class="t " style="left:255.5px;top:636.1px;font-size:8.7px;letter-spacing:-0.789px;height:12.8px;line-height:12.8px;">POROTHERM</div>
<div class="b " style="left:179px;top:666.2px;width:829px;height:1px;background:#dddfe8"></div>
<div class="t " style="left:182.5px;top:652.6px;font-size:8.7px;letter-spacing:-0.183px;height:12.8px;line-height:12.8px;">900004</div>
<div class="t " style="left:255.5px;top:652.6px;font-size:8.7px;letter-spacing:-0.433px;height:12.8px;line-height:12.8px;">POROTHERM Profi 44</div>
<div class="b " style="left:179px;top:438px;width:1px;height:229px;background:#dddfe8"></div>
<div class="b " style="left:252.5px;top:438px;width:1px;height:229px;background:#dddfe8"></div>
<div class="b " style="left:422px;top:438px;width:1px;height:229px;background:#dddfe8"></div>
<div class="b " style="left:491px;top:438px;width:1px;height:229px;background:#dddfe8"></div>
<div class="b " style="left:547px;top:438px;width:1px;height:229px;background:#dddfe8"></div>
<div class="b " style="left:606px;top:438px;width:1px;height:229px;background:#dddfe8"></div>
<div class="b " style="left:697px;top:438px;width:1px;height:229px;background:#dddfe8"></div>
<div class="b " style="left:756px;top:438px;width:1px;height:229px;background:#dddfe8"></div>
<div class="b " style="left:817px;top:438px;width:1px;height:229px;background:#dddfe8"></div>
<svg class="i" style="left:171.3px;top:457.8px" width="4" height="7" viewBox="0 0 4 7"><path d="M0.4 0.8 L3.3 3.5 L0.4 6.2Z" fill="#222"/></svg>
<div class="t " style="right:536.6px;top:652.6px;text-align:right;font-size:8.7px;letter-spacing:-0.096px;height:12.8px;line-height:12.8px;">4,42</div>
<div class="t bold" style="right:480.1px;top:652.6px;text-align:right;font-size:8.7px;letter-spacing:0.39px;height:12.8px;line-height:12.8px;">5,30</div>
<div class="t " style="right:421.6px;top:652.6px;text-align:right;font-size:8.7px;letter-spacing:-0.096px;height:12.8px;line-height:12.8px;">5,76</div>
<div class="t " style="right:329.6px;top:652.6px;text-align:right;font-size:8.7px;letter-spacing:-0.096px;height:12.8px;line-height:12.8px;">1,50</div>
<div class="t " style="right:211.6px;top:652.6px;text-align:right;font-size:8.7px;letter-spacing:-0.096px;height:12.8px;line-height:12.8px;">4,80</div>
<div class="b " style="left:996px;top:655px;width:13px;height:12px;background:#d3d9e7"></div>
<svg class="i" style="left:1000px;top:659.5px" width="6" height="4" viewBox="0 0 6 4"><path d="M0 0 L6 0 L3.0 4Z" fill="#66728c"/></svg>
<div class="b " style="left:6px;top:676px;width:1012px;height:25px;background:#d0d6e4;border-bottom:1px solid #b9c0d0;border-top:1px solid #d9deea"></div>
<svg class="i" style="left:14px;top:681px" width="13" height="13" viewBox="0 0 13 13"><circle cx="7.6" cy="2.6" r="2.3" fill="#8a4a1f"/><circle cx="7.6" cy="3.4" r="1.5" fill="#f4c28a"/><path d="M4.4 10.4 L5.2 5.6 H10 L10.8 10.4Z" fill="#f1c232"/><path d="M0.6 6 L4.6 5.2 L8.8 9 L12.6 7.6 L9 12.4 L4.6 9.4 L1 9.4Z" fill="#4c8be0" stroke="#2f67c0" stroke-width="0.5"/><path d="M0.6 6.6 L3.6 6.6" stroke="#fff" stroke-width="1.4"/></svg>
<div class="t " style="left:28.5px;top:681.8px;font-size:8.7px;letter-spacing:-0.287px;height:12.8px;line-height:12.8px;color:#6c7792">Dudášová</div>
<svg class="i" style="left:78px;top:682.6px" width="12" height="9" viewBox="0 0 12 9"><rect x="0" y="0" width="12" height="3" fill="#f7f7f7"/><rect x="0" y="3" width="12" height="3" fill="#2b59c3"/><rect x="0" y="6" width="12" height="3" fill="#e0202d"/><path d="M2.4 2 H6 V5.8 Q4.2 7.6 2.4 5.8Z" fill="#e0202d" stroke="#fff" stroke-width="0.6"/></svg>
<svg class="i" style="left:106px;top:681.2px" width="10" height="12" viewBox="0 0 10 12"><path d="M0.6 2.2 V9.8 A4.4 1.8 0 0 0 9.4 9.8 V2.2Z" fill="#e7a92d" stroke="#b77d12" stroke-width="0.7"/><ellipse cx="5" cy="2.2" rx="4.4" ry="1.7" fill="#f7d36a" stroke="#b77d12" stroke-width="0.7"/><path d="M0.6 5 A4.4 1.8 0 0 0 9.4 5M0.6 7.6 A4.4 1.8 0 0 0 9.4 7.6" stroke="#c48a1a" stroke-width="0.7" fill="none"/><path d="M2.6 3.6V10.6" stroke="#fbe6a0" stroke-width="1.2"/></svg>
<div class="t " style="left:119.5px;top:681.8px;font-size:8.7px;letter-spacing:-0.155px;height:12.8px;line-height:12.8px;color:#7a8296">IVANAD test (MySQL/IVANADtest, V2246)</div>
<div class="b " style="left:286.5px;top:679px;width:1px;height:19px;background:#e4e8f1"></div>
<svg class="i" style="left:298.8px;top:681.7px" width="12" height="12" viewBox="0 0 12 12"><circle cx="6" cy="6" r="5.6" fill="#d98b2b" stroke="#b56d17" stroke-width="0.7"/><circle cx="6" cy="5.4" r="3.8" fill="#e9a54b"/><path d="M3.4 6 L5.4 8 L8.8 3.8" stroke="#fff" stroke-width="1.5" fill="none"/></svg>
<div class="t " style="left:314px;top:681.8px;font-size:8.7px;letter-spacing:-0.096px;height:12.8px;line-height:12.8px;color:#7a8296">2.32.532</div>
<div class="b " style="left:357px;top:679px;width:1px;height:19px;background:#e4e8f1"></div>
<svg class="i" style="left:366px;top:681px" width="13" height="13" viewBox="0 0 13 13"><rect x="0.5" y="0.5" width="9" height="10" fill="#f1f1ec" stroke="#a9a99b" stroke-width="0.8"/><rect x="1.6" y="2" width="3" height="1.2" fill="#888"/><rect x="6" y="2" width="2" height="1.2" fill="#d44"/><rect x="1.6" y="4.6" width="2.6" height="5" fill="#d9342b"/><circle cx="8.6" cy="9" r="3.7" fill="#43b24a"/><path d="M6.8 9 L8.2 10.5 L10.6 7.6" stroke="#fff" stroke-width="1.2" fill="none"/></svg>
<svg class="i" style="left:882px;top:681.2px" width="13" height="13" viewBox="0 0 13 13"><rect x="0.5" y="1.5" width="9" height="11" fill="#f6f6f2" stroke="#9a9a90" stroke-width="0.8"/><path d="M4.4 4.4H8M4.4 6.8H8M4.4 9.2H7" stroke="#8a8a8a" stroke-width="0.8"/><path d="M1.6 4.2 L2.4 5 L3.6 3.4M1.6 6.6 L2.4 7.4 L3.6 5.8M1.6 9 L2.4 9.8 L3.6 8.2" stroke="#d8342c" stroke-width="0.8" fill="none"/><path d="M11.6 2.6 L6 9.4 L5.4 11.2 L7.2 10.4 L12.8 3.6Z" fill="#f2b33a" stroke="#c9881a" stroke-width="0.5"/><path d="M11.6 2.6 L12.4 1.6 L13.4 2.6 L12.8 3.6Z" fill="#e0342c"/></svg>
<div class="t " style="left:898.5px;top:681.8px;font-size:8.7px;letter-spacing:-0.122px;height:12.8px;line-height:12.8px;color:#7a8296">3 dokončené úlohy</div>
<svg class="i" style="left:1005.5px;top:686.5px" width="4" height="3" viewBox="0 0 4 3"><path d="M0 0 L4 0 L2.0 3Z" fill="#66708a"/></svg>
<div class="b " style="left:278px;top:150px;width:733px;height:505px;background:#c4cade;border:1px solid #5d6884"></div>
<svg class="i" style="left:286px;top:160px" width="13" height="12" viewBox="0 0 13 12"><rect x="0.5" y="0.5" width="12" height="11" fill="#eceef3" stroke="#a9aeb9"/><rect x="0.5" y="0.5" width="12" height="2.8" fill="#6f9fe0"/><path d="M1 6H5M1 8.4H5M3 3.5V11" stroke="#a3a8b4" stroke-width="0.8"/><rect x="5.2" y="4.6" width="7.3" height="7" fill="#fafafa" stroke="#9b9fa8" stroke-width="0.7"/><text x="8.9" y="10.8" font-family="Liberation Sans" font-weight="bold" font-size="7.2" text-anchor="middle" fill="#3a3a3a" letter-spacing="0">C</text></svg>
<div class="t " style="left:302px;top:158.0px;font-size:10.9px;letter-spacing:-0.389px;height:16.0px;line-height:16.0px;color:#3a4868">Definícia cenníka</div>
<div class="b " style="left:928.2px;top:166.2px;width:7.6px;height:2.3px;background:#1c1c1c"></div>
<div class="b " style="left:956.5px;top:162.3px;width:7.6px;height:7.2px;border:1px solid #1c1c1c;border-top:2px solid #1c1c1c"></div>
<svg class="i" style="left:986px;top:162.5px" width="7" height="7" viewBox="0 0 7 7"><path d="M0.7 0.7L6.3 6.3M6.3 0.7L0.7 6.3" stroke="#1c1c1c" stroke-width="1.4"/></svg>
<div class="b " style="left:283px;top:181px;width:722px;height:468px;background:#d5dbe8;border:1px solid #b7bfd0"></div>
<svg class="i" style="left:291px;top:187px" width="11" height="12" viewBox="0 0 11 12"><path d="M0.6 0.6 H7 L10.4 4 V11.4 H0.6Z" fill="#d4d6dc" stroke="#c2c5cd" stroke-width="1"/></svg>
<svg class="i" style="left:311px;top:187px" width="12" height="12" viewBox="0 0 12 12"><rect x="0.5" y="0.5" width="11" height="11" rx="1" fill="#4a8fe0" stroke="#2f6dc0" stroke-width="0.9"/><rect x="2.4" y="1" width="7.2" height="4.4" fill="#e9f1fb"/><rect x="2.8" y="7" width="6.4" height="4.4" fill="#1d2a44"/><rect x="6.8" y="7.8" width="1.6" height="2.6" fill="#9db5d8"/></svg>
<svg class="i" style="left:331px;top:186px" width="13" height="13" viewBox="0 0 13 13"><rect x="0.5" y="1.5" width="11" height="11" rx="1" fill="#4a8fe0" stroke="#2f6dc0" stroke-width="0.9"/><rect x="2.4" y="2" width="5" height="4.4" fill="#e9f1fb"/><rect x="2.8" y="8" width="6.4" height="4.4" fill="#1d2a44"/><rect x="6.4" y="0" width="6.4" height="6" rx="0.8" fill="#e23b3b" stroke="#b92323" stroke-width="0.6"/><path d="M8 1.4L11.2 4.6M11.2 1.4L8 4.6" stroke="#fff" stroke-width="1.1"/></svg>
<div class="b in" style="left:877px;top:185px;width:123px;height:16px;"></div>
<div class="t " style="left:880.5px;top:186.6px;font-size:8.7px;letter-spacing:-0.131px;height:12.8px;line-height:12.8px;color:#333">Základný pohľad</div>
<svg class="i" style="left:975px;top:192px" width="5" height="3" viewBox="0 0 5 3"><path d="M0 0 L5 0 L2.5 3Z" fill="#717990"/></svg>
<svg class="i" style="left:985px;top:187px" width="12" height="12" viewBox="0 0 12 12"><rect x="0.3" y="0.3" width="8" height="8" fill="#f3f6fb" stroke="#9fb2d2" stroke-width="0.6"/><rect x="2.5" y="2.5" width="9" height="9" rx="0.8" fill="#4a8fe0" stroke="#2f6dc0" stroke-width="0.8"/><rect x="4.2" y="3" width="5.6" height="3.2" fill="#e9f1fb"/><rect x="4.4" y="7.8" width="5.2" height="3.4" fill="#dfe9f7"/></svg>
<div class="b " style="left:287px;top:206px;width:714px;height:17px;background:#c0d1db"></div>
<div class="t " style="left:593.4px;top:207.0px;font-size:10.9px;letter-spacing:-0.144px;height:16.0px;line-height:16.0px;color:#4e5257;font-weight:bold">Definícia cenníka</div>
<svg class="i" style="left:993px;top:213.5px" width="4" height="3" viewBox="0 0 4 3"><path d="M0 0 L4 0 L2.0 3Z" fill="#333"/></svg>
<div class="t " style="left:293px;top:237.2px;font-size:8.7px;letter-spacing:-0.367px;height:12.8px;line-height:12.8px;color:#2f3b5c">Názov</div>
<div class="b in" style="left:354px;top:235px;width:641px;height:15.4px;"></div>
<div class="t " style="left:357.5px;top:237.2px;font-size:8.7px;letter-spacing:-0.208px;height:12.8px;line-height:12.8px;color:#2e2e2e">Akcia Vianoce 2022</div>
<div class="t " style="left:293px;top:255.7px;font-size:8.7px;letter-spacing:-0.244px;height:12.8px;line-height:12.8px;color:#2f3b5c">Určenie</div>
<div class="b in" style="left:354px;top:254px;width:160px;height:15.6px;"></div>
<div class="t " style="left:357.5px;top:256.3px;font-size:8.7px;letter-spacing:-0.202px;height:12.8px;line-height:12.8px;color:#2e2e2e">Maloobchodný cenník</div>
<svg class="i" style="left:504.4px;top:260.40000000000003px" width="4.6" height="2.9" viewBox="0 0 4.6 2.9"><path d="M0 0 L4.6 0 L2.3 2.9Z" fill="#717990"/></svg>
<div class="t " style="left:525px;top:255.7px;font-size:8.7px;letter-spacing:-0.028px;height:12.8px;line-height:12.8px;color:#2f3b5c">Typ</div>
<div class="b in" style="left:585px;top:254px;width:156px;height:15.6px;"></div>
<div class="t " style="left:588.5px;top:256.3px;font-size:8.7px;letter-spacing:-0.14px;height:12.8px;line-height:12.8px;color:#2e2e2e">Všeobecný cenník (akcia, leták)</div>
<svg class="i" style="left:731.4px;top:260.40000000000003px" width="4.6" height="2.9" viewBox="0 0 4.6 2.9"><path d="M0 0 L4.6 0 L2.3 2.9Z" fill="#717990"/></svg>
<div class="t " style="left:753px;top:255.7px;font-size:8.7px;letter-spacing:-0.133px;height:12.8px;line-height:12.8px;color:#2f3b5c">Druh ceny</div>
<div class="b in" style="left:814px;top:254px;width:181px;height:15.6px;"></div>
<div class="t " style="left:817.5px;top:256.3px;font-size:8.7px;letter-spacing:-0.205px;height:12.8px;line-height:12.8px;color:#2e2e2e">Zľava</div>
<svg class="i" style="left:985.4px;top:260.40000000000003px" width="4.6" height="2.9" viewBox="0 0 4.6 2.9"><path d="M0 0 L4.6 0 L2.3 2.9Z" fill="#717990"/></svg>
<div class="t " style="left:293px;top:274.5px;font-size:8.7px;letter-spacing:-0.368px;height:12.8px;line-height:12.8px;color:#2f3b5c">Mena</div>
<div class="b in" style="left:354px;top:272.6px;width:160px;height:15.8px;"></div>
<div class="t " style="left:357.5px;top:275.0px;font-size:8.7px;letter-spacing:-0.252px;height:12.8px;line-height:12.8px;color:#2e2e2e">Domáca mena (EUR)</div>
<svg class="i" style="left:504.4px;top:279.1px" width="4.6" height="2.9" viewBox="0 0 4.6 2.9"><path d="M0 0 L4.6 0 L2.3 2.9Z" fill="#717990"/></svg>
<div class="t " style="left:525px;top:274.5px;font-size:8.7px;letter-spacing:-0.159px;height:12.8px;line-height:12.8px;color:#2f3b5c">Platí pre cenu</div>
<div class="b in" style="left:585px;top:272.6px;width:156px;height:15.8px;"></div>
<div class="t " style="left:588.5px;top:275.0px;font-size:8.7px;letter-spacing:-0.191px;height:12.8px;line-height:12.8px;color:#2e2e2e">Všetky ceny</div>
<svg class="i" style="left:731.4px;top:279.1px" width="4.6" height="2.9" viewBox="0 0 4.6 2.9"><path d="M0 0 L4.6 0 L2.3 2.9Z" fill="#717990"/></svg>
<div class="t " style="left:753px;top:274.5px;font-size:8.7px;letter-spacing:-0.157px;height:12.8px;line-height:12.8px;color:#2f3b5c">Platí pre sklady</div>
<div class="b in" style="left:814px;top:272.6px;width:181px;height:15.8px;"></div>
<svg class="i" style="left:985.4px;top:279.1px" width="4.6" height="2.9" viewBox="0 0 4.6 2.9"><path d="M0 0 L4.6 0 L2.3 2.9Z" fill="#717990"/></svg>
<div class="t " style="left:293px;top:301.2px;font-size:8.7px;letter-spacing:-0.167px;height:12.8px;line-height:12.8px;color:#2f3b5c">Platnosť</div>
<div class="b in" style="left:354px;top:299px;width:160px;height:16px;"></div>
<div class="t " style="left:357.5px;top:301.5px;font-size:8.7px;letter-spacing:-0.189px;height:12.8px;line-height:12.8px;color:#2e2e2e">Platný Od Do</div>
<svg class="i" style="left:504.4px;top:305.6px" width="4.6" height="2.9" viewBox="0 0 4.6 2.9"><path d="M0 0 L4.6 0 L2.3 2.9Z" fill="#717990"/></svg>
<div class="t " style="left:525px;top:301.2px;font-size:8.7px;letter-spacing:-0.195px;height:12.8px;line-height:12.8px;color:#2f3b5c">Začiatok</div>
<div class="b in" style="left:585px;top:299px;width:156px;height:16px;"></div>
<div class="t " style="left:588.5px;top:301.5px;font-size:8.7px;letter-spacing:-0.077px;height:12.8px;line-height:12.8px;color:#2e2e2e">št 01.12.2022</div>
<svg class="i" style="left:731.4px;top:305.6px" width="4.6" height="2.9" viewBox="0 0 4.6 2.9"><path d="M0 0 L4.6 0 L2.3 2.9Z" fill="#717990"/></svg>
<div class="t " style="left:751.5px;top:301.2px;font-size:8.7px;letter-spacing:-0.306px;height:12.8px;line-height:12.8px;color:#2f3b5c">Koniec</div>
<div class="b in" style="left:812.5px;top:299px;width:182.5px;height:16px;"></div>
<div class="t " style="left:816.0px;top:301.5px;font-size:8.7px;letter-spacing:-0.126px;height:12.8px;line-height:12.8px;color:#2e2e2e">so 31.12.2022</div>
<svg class="i" style="left:985.4px;top:305.6px" width="4.6" height="2.9" viewBox="0 0 4.6 2.9"><path d="M0 0 L4.6 0 L2.3 2.9Z" fill="#717990"/></svg>
<div class="b " style="left:295px;top:321px;width:10px;height:10px;background:#fff;border:1px solid #aeb6c8"></div>
<div class="t " style="left:307.5px;top:319.6px;font-size:8.7px;letter-spacing:-0.139px;height:12.8px;line-height:12.8px;color:#2f3b5c">Len pre e-shop</div>
<div class="b " style="left:526px;top:321px;width:10px;height:10px;background:#fff;border:1px solid #aeb6c8"></div>
<div class="t " style="left:538.5px;top:319.6px;font-size:8.7px;letter-spacing:-0.102px;height:12.8px;line-height:12.8px;color:#2f3b5c">Neuplatňovať zľavy</div>
<div class="b " style="left:294px;top:365px;width:701px;height:239px;background:#d9deea;border:1px solid #b4bccd"></div>
<div class="b " style="left:294px;top:345.5px;width:47px;height:20.5px;background:#d9deea;border:1px solid #b4bccd;border-bottom:none"></div>
<div class="t " style="left:302.5px;top:349.1px;font-size:8.7px;letter-spacing:-0.325px;height:12.8px;line-height:12.8px;color:#2f3b5c">Položky</div>
<svg class="i" style="left:305px;top:379.5px" width="8" height="7" viewBox="0 0 8 7"><path d="M0.3 0.9H7M0.3 3.3H7M0.3 5.7H7" stroke="#474e60" stroke-width="0.9"/></svg>
<svg class="i" style="left:322px;top:376.2px" width="13" height="13" viewBox="0 0 13 13"><rect x="0.5" y="0.5" width="9.4" height="10" fill="#f4f6fb" stroke="#93a8d3" stroke-width="0.9"/><circle cx="6.8" cy="7.8" r="4.3" fill="#6cb646" stroke="#55a033" stroke-width="0.7"/><circle cx="6.8" cy="7.6" r="2.3" fill="#a6d888"/><path d="M6.8 5.8V9.6M4.9 7.7H8.7" stroke="#fff" stroke-width="1"/></svg>
<svg class="i" style="left:341.4px;top:376.6px" width="12" height="12" viewBox="0 0 12 12"><path d="M1 11 L10.6 0.9" stroke="#d8232a" stroke-width="1.8" stroke-linecap="round"/><path d="M0.8 11.2 L3.4 8.6" stroke="#cf1c23" stroke-width="2.3" stroke-linecap="round"/><path d="M1.6 1 L10.6 11" stroke="#e4646a" stroke-width="1.2" stroke-linecap="round"/></svg>
<div class="b " style="left:360px;top:373px;width:1px;height:19.5px;background:#b4bbcb"></div>
<svg class="i" style="left:369px;top:377.3px" width="10" height="10" viewBox="0 0 10 10"><rect x="2" y="0.5" width="6" height="5" fill="#e6f0fb" stroke="#86aede" stroke-width="0.8"/><rect x="0.5" y="4.6" width="9" height="4.6" rx="0.8" fill="#ecebe6" stroke="#8f8d86" stroke-width="0.9"/><rect x="2" y="7.5" width="6" height="1.1" fill="#77756f"/></svg>
<div class="t " style="left:383px;top:376.8px;font-size:8.7px;letter-spacing:-0.274px;height:12.8px;line-height:12.8px;color:#2f3b5c">Tlač</div>
<svg class="i" style="left:405.5px;top:377px" width="14" height="12" viewBox="0 0 14 12"><path d="M0.8 11 V6.4 L2.8 1 H5.4 L6.4 4.8 V11Z" fill="#3a64b0" stroke="#27478c" stroke-width="0.7"/><path d="M13.2 11 V6.4 L11.2 1 H8.6 L7.6 4.8 V11Z" fill="#3a64b0" stroke="#27478c" stroke-width="0.7"/><rect x="5.8" y="4" width="2.4" height="2.6" fill="#2b4d95"/><path d="M3.2 2.2 L2.2 6.4 V9.6M10.8 2.2 L11.8 6.4 V9.6" stroke="#b9cdf0" stroke-width="1" fill="none"/><path d="M4.6 1.6V4M9.4 1.6V4" stroke="#e8effb" stroke-width="0.9"/></svg>
<svg class="i" style="left:427px;top:377px" width="12" height="12" viewBox="0 0 12 12"><path d="M0.6 0.8 H11.4 L7.4 5.6 V10.6 L4.6 11.4 V5.6Z" fill="#f9b732" stroke="#e59a1a" stroke-width="0.8" stroke-linejoin="round"/><path d="M1.6 1.4H10.4" stroke="#fde29a" stroke-width="1"/></svg>
<div class="b " style="left:445px;top:373px;width:1px;height:20px;background:#b4bbcb"></div>
<svg class="i" style="left:452.5px;top:376.5px" width="13" height="12" viewBox="0 0 13 12"><path d="M3.8 3.2 L10.4 10" stroke="#b3bbca" stroke-width="1.4" stroke-linecap="round"/><path d="M0.9 3.6 A2.8 2.8 0 0 1 4.4 0.8 L3.2 2.4 L4.2 3.6 L1.9 4.4Z" fill="#a4adbf"/><path d="M11.2 1.6 L6.4 6.8" stroke="#bcc3d1" stroke-width="1.1"/><path d="M6.2 7 L1.8 11" stroke="#ee9a3e" stroke-width="2.3" stroke-linecap="round"/><path d="M4.6 7.6 L2.4 9.6" stroke="#f7c58a" stroke-width="0.8" stroke-linecap="round"/><path d="M9.6 1 L12 1 L12 3.4" stroke="#a4adbf" stroke-width="1" fill="none"/><path d="M9.6 9.2 L11.2 11" stroke="#9fa8bb" stroke-width="1.9" stroke-linecap="round"/></svg>
<div class="t " style="left:469px;top:376.8px;font-size:8.7px;letter-spacing:-0.27px;height:12.8px;line-height:12.8px;color:#2f3b5c">Funkcie</div>
<svg class="i" style="left:499.8px;top:381.9px" width="4.2" height="2.7" viewBox="0 0 4.2 2.7"><path d="M0 0 L4.2 0 L2.1 2.7Z" fill="#222"/></svg>
<svg class="i" style="left:515px;top:378.5px" width="10" height="9" viewBox="0 0 10 9"><rect x="0.5" y="0.5" width="9" height="8" fill="#edf4fa" stroke="#adc0d6" stroke-width="0.8"/><rect x="0.8" y="0.8" width="8.4" height="1.4" fill="#d3e0ee"/><path d="M5 2.4V8" stroke="#c9d7e6" stroke-width="0.7"/></svg>
<div class="t " style="left:528.5px;top:376.8px;font-size:8.7px;letter-spacing:-0.288px;height:12.8px;line-height:12.8px;color:#2f3b5c">Ďalšie</div>
<svg class="i" style="left:553.3px;top:381.9px" width="4.2" height="2.7" viewBox="0 0 4.2 2.7"><path d="M0 0 L4.2 0 L2.1 2.7Z" fill="#222"/></svg>
<div class="b " style="left:300.5px;top:394.3px;width:688.5px;height:204.7px;background:#fff;border:1px solid #c5cbd9"></div>
<div class="b " style="left:301.5px;top:395.3px;width:686.5px;height:15.6px;background:#f5f7fb;border-bottom:1px solid #dddfe8"></div>
<svg class="i" style="left:304px;top:399.2px" width="8" height="8" viewBox="0 0 8 8"><circle cx="3.7" cy="3.7" r="2.9" fill="#f2f3f6" stroke="#c8cbd3" stroke-width="1"/><circle cx="3.7" cy="3.7" r="1" fill="#dcdee5"/></svg>
<div class="t hd" style="left:318.5px;top:396.6px;font-size:8.7px;letter-spacing:-0.472px;height:12.8px;line-height:12.8px;">Číslo</div>
<div class="t hd" style="left:417.5px;top:396.6px;font-size:8.7px;letter-spacing:-0.367px;height:12.8px;line-height:12.8px;">Názov</div>
<svg class="i" style="left:578px;top:401px" width="6" height="4" viewBox="0 0 6 4"><path d="M0 3.6 L3 0.2 L6 3.6Z" fill="#4b5366"/></svg>
<div class="t hd" style="right:359.9px;top:396.6px;text-align:right;font-size:8.7px;letter-spacing:-0.386px;height:12.8px;line-height:12.8px;">Cena bez DPH</div>
<div class="t hd bold" style="right:282.5px;top:396.6px;text-align:right;font-size:8.7px;letter-spacing:0.022px;height:12.8px;line-height:12.8px;color:#222">Cena s DPH</div>
<div class="t hd" style="right:175.3px;top:396.6px;text-align:right;font-size:8.7px;letter-spacing:-0.326px;height:12.8px;line-height:12.8px;">Cena bežná bez DPH</div>
<div class="t hd" style="right:66.3px;top:396.6px;text-align:right;font-size:8.7px;letter-spacing:-0.336px;height:12.8px;line-height:12.8px;">Cena bežná s DPH</div>
<div class="b " style="left:315px;top:426.6px;width:646px;height:1px;background:#dddfe8"></div>
<div class="t " style="left:318.5px;top:413.1px;font-size:8.7px;letter-spacing:-0.183px;height:12.8px;line-height:12.8px;">50016</div>
<div class="t " style="left:417.5px;top:413.1px;font-size:8.7px;letter-spacing:-0.301px;height:12.8px;line-height:12.8px;">Chladič</div>
<div class="t " style="right:359.6px;top:413.1px;text-align:right;font-size:8.7px;letter-spacing:-0.125px;height:12.8px;line-height:12.8px;">108,33</div>
<div class="t bold" style="right:282.1px;top:413.1px;text-align:right;font-size:8.7px;letter-spacing:0.401px;height:12.8px;line-height:12.8px;color:#111">130,00</div>
<div class="t " style="right:175.1px;top:413.1px;text-align:right;font-size:8.7px;letter-spacing:-0.125px;height:12.8px;line-height:12.8px;">140,00</div>
<div class="t " style="right:66.1px;top:413.1px;text-align:right;font-size:8.7px;letter-spacing:-0.125px;height:12.8px;line-height:12.8px;">168,00</div>
<div class="b " style="left:315px;top:443.0px;width:646px;height:1px;background:#dddfe8"></div>
<div class="t " style="left:318.5px;top:429.5px;font-size:8.7px;letter-spacing:-0.183px;height:12.8px;line-height:12.8px;">70003</div>
<div class="t " style="left:417.5px;top:429.5px;font-size:8.7px;letter-spacing:-0.28px;height:12.8px;line-height:12.8px;">Chlieb</div>
<div class="t " style="right:359.6px;top:429.5px;text-align:right;font-size:8.7px;letter-spacing:-0.096px;height:12.8px;line-height:12.8px;">0,46</div>
<div class="t bold" style="right:282.1px;top:429.5px;text-align:right;font-size:8.7px;letter-spacing:0.39px;height:12.8px;line-height:12.8px;color:#111">0,55</div>
<div class="t " style="right:175.1px;top:429.5px;text-align:right;font-size:8.7px;letter-spacing:-0.096px;height:12.8px;line-height:12.8px;">0,50</div>
<div class="t " style="right:66.1px;top:429.5px;text-align:right;font-size:8.7px;letter-spacing:-0.096px;height:12.8px;line-height:12.8px;">0,60</div>
<div class="b " style="left:315px;top:459.4px;width:646px;height:1px;background:#dddfe8"></div>
<div class="t " style="left:318.5px;top:445.9px;font-size:8.7px;letter-spacing:-0.303px;height:12.8px;line-height:12.8px;">5000B</div>
<div class="t " style="left:417.5px;top:445.9px;font-size:8.7px;letter-spacing:-0.373px;height:12.8px;line-height:12.8px;">Koax</div>
<div class="t " style="right:359.6px;top:445.9px;text-align:right;font-size:8.7px;letter-spacing:-0.096px;height:12.8px;line-height:12.8px;">3,50</div>
<div class="t bold" style="right:282.1px;top:445.9px;text-align:right;font-size:8.7px;letter-spacing:0.39px;height:12.8px;line-height:12.8px;color:#111">4,20</div>
<div class="t " style="right:175.1px;top:445.9px;text-align:right;font-size:8.7px;letter-spacing:-0.096px;height:12.8px;line-height:12.8px;">3,80</div>
<div class="t " style="right:66.1px;top:445.9px;text-align:right;font-size:8.7px;letter-spacing:-0.096px;height:12.8px;line-height:12.8px;">4,56</div>
<div class="b " style="left:315px;top:475.8px;width:646px;height:1px;background:#dddfe8"></div>
<div class="t " style="left:318.5px;top:462.3px;font-size:8.7px;letter-spacing:-0.39px;height:12.8px;line-height:12.8px;">VY0005</div>
<div class="t " style="left:417.5px;top:462.3px;font-size:8.7px;letter-spacing:-0.156px;height:12.8px;line-height:12.8px;">Koláčik malinový</div>
<div class="t " style="right:359.6px;top:462.3px;text-align:right;font-size:8.7px;letter-spacing:-0.096px;height:12.8px;line-height:12.8px;">0,71</div>
<div class="t bold" style="right:282.1px;top:462.3px;text-align:right;font-size:8.7px;letter-spacing:0.39px;height:12.8px;line-height:12.8px;color:#111">0,85</div>
<div class="t " style="right:175.1px;top:462.3px;text-align:right;font-size:8.7px;letter-spacing:-0.096px;height:12.8px;line-height:12.8px;">0,75</div>
<div class="t " style="right:66.1px;top:462.3px;text-align:right;font-size:8.7px;letter-spacing:-0.096px;height:12.8px;line-height:12.8px;">0,90</div>
<div class="b " style="left:315px;top:492.2px;width:646px;height:1px;background:#dddfe8"></div>
<div class="t " style="left:318.5px;top:478.7px;font-size:8.7px;letter-spacing:-0.183px;height:12.8px;line-height:12.8px;">50009</div>
<div class="t " style="left:417.5px;top:478.7px;font-size:8.7px;letter-spacing:-0.121px;height:12.8px;line-height:12.8px;">Ovládač diaľkový dvojcestný</div>
<div class="t " style="right:359.6px;top:478.7px;text-align:right;font-size:8.7px;letter-spacing:-0.114px;height:12.8px;line-height:12.8px;">33,33</div>
<div class="t bold" style="right:282.1px;top:478.7px;text-align:right;font-size:8.7px;letter-spacing:0.396px;height:12.8px;line-height:12.8px;color:#111">40,00</div>
<div class="t " style="right:175.1px;top:478.7px;text-align:right;font-size:8.7px;letter-spacing:-0.114px;height:12.8px;line-height:12.8px;">35,00</div>
<div class="t " style="right:66.1px;top:478.7px;text-align:right;font-size:8.7px;letter-spacing:-0.114px;height:12.8px;line-height:12.8px;">42,00</div>
<div class="b " style="left:315px;top:508.6px;width:646px;height:1px;background:#dddfe8"></div>
<div class="t " style="left:318.5px;top:495.1px;font-size:8.7px;letter-spacing:-0.183px;height:12.8px;line-height:12.8px;">900010</div>
<div class="t " style="left:417.5px;top:495.1px;font-size:8.7px;letter-spacing:-0.095px;height:12.8px;line-height:12.8px;">Pivničná tehla Antik</div>
<div class="t " style="right:359.6px;top:495.1px;text-align:right;font-size:8.7px;letter-spacing:-0.096px;height:12.8px;line-height:12.8px;">2,42</div>
<div class="t bold" style="right:282.1px;top:495.1px;text-align:right;font-size:8.7px;letter-spacing:0.39px;height:12.8px;line-height:12.8px;color:#111">2,90</div>
<div class="t " style="right:175.1px;top:495.1px;text-align:right;font-size:8.7px;letter-spacing:-0.096px;height:12.8px;line-height:12.8px;">2,50</div>
<div class="t " style="right:66.1px;top:495.1px;text-align:right;font-size:8.7px;letter-spacing:-0.096px;height:12.8px;line-height:12.8px;">3,00</div>
<div class="b " style="left:315px;top:525.0px;width:646px;height:1px;background:#dddfe8"></div>
<div class="t " style="left:318.5px;top:511.5px;font-size:8.7px;letter-spacing:-0.183px;height:12.8px;line-height:12.8px;">900008</div>
<div class="t " style="left:417.5px;top:511.5px;font-size:8.7px;letter-spacing:-0.142px;height:12.8px;line-height:12.8px;">Pivničná tehla hladká</div>
<div class="t " style="right:359.6px;top:511.5px;text-align:right;font-size:8.7px;letter-spacing:-0.096px;height:12.8px;line-height:12.8px;">0,79</div>
<div class="t bold" style="right:282.1px;top:511.5px;text-align:right;font-size:8.7px;letter-spacing:0.39px;height:12.8px;line-height:12.8px;color:#111">0,95</div>
<div class="t " style="right:175.1px;top:511.5px;text-align:right;font-size:8.7px;letter-spacing:-0.096px;height:12.8px;line-height:12.8px;">0,90</div>
<div class="t " style="right:66.1px;top:511.5px;text-align:right;font-size:8.7px;letter-spacing:-0.096px;height:12.8px;line-height:12.8px;">1,08</div>
<div class="b " style="left:315px;top:541.4px;width:646px;height:1px;background:#dddfe8"></div>
<div class="t " style="left:318.5px;top:527.9px;font-size:8.7px;letter-spacing:-0.183px;height:12.8px;line-height:12.8px;">900004</div>
<div class="t " style="left:417.5px;top:527.9px;font-size:8.7px;letter-spacing:-0.433px;height:12.8px;line-height:12.8px;">POROTHERM Profi 44</div>
<div class="t " style="right:359.6px;top:527.9px;text-align:right;font-size:8.7px;letter-spacing:-0.096px;height:12.8px;line-height:12.8px;">4,42</div>
<div class="t bold" style="right:282.1px;top:527.9px;text-align:right;font-size:8.7px;letter-spacing:0.39px;height:12.8px;line-height:12.8px;color:#111">5,30</div>
<div class="t " style="right:175.1px;top:527.9px;text-align:right;font-size:8.7px;letter-spacing:-0.096px;height:12.8px;line-height:12.8px;">4,80</div>
<div class="t " style="right:66.1px;top:527.9px;text-align:right;font-size:8.7px;letter-spacing:-0.096px;height:12.8px;line-height:12.8px;">5,76</div>
<div class="b " style="left:315px;top:557.8px;width:646px;height:1px;background:#dddfe8"></div>
<div class="t " style="left:318.5px;top:544.3px;font-size:8.7px;letter-spacing:-0.183px;height:12.8px;line-height:12.8px;">900007</div>
<div class="t " style="left:417.5px;top:544.3px;font-size:8.7px;letter-spacing:-0.317px;height:12.8px;line-height:12.8px;">POROTHERM Profi 44 K 1/2</div>
<div class="t " style="right:359.6px;top:544.3px;text-align:right;font-size:8.7px;letter-spacing:-0.096px;height:12.8px;line-height:12.8px;">4,00</div>
<div class="t bold" style="right:282.1px;top:544.3px;text-align:right;font-size:8.7px;letter-spacing:0.39px;height:12.8px;line-height:12.8px;color:#111">4,80</div>
<div class="t " style="right:175.1px;top:544.3px;text-align:right;font-size:8.7px;letter-spacing:-0.096px;height:12.8px;line-height:12.8px;">4,50</div>
<div class="t " style="right:66.1px;top:544.3px;text-align:right;font-size:8.7px;letter-spacing:-0.096px;height:12.8px;line-height:12.8px;">5,40</div>
<div class="b " style="left:315px;top:574.2px;width:646px;height:1px;background:#dddfe8"></div>
<div class="t " style="left:318.5px;top:560.7px;font-size:8.7px;letter-spacing:-0.183px;height:12.8px;line-height:12.8px;">900006</div>
<div class="t " style="left:417.5px;top:560.7px;font-size:8.7px;letter-spacing:-0.426px;height:12.8px;line-height:12.8px;">POROTHERM Profi 44 R</div>
<div class="t " style="right:359.6px;top:560.7px;text-align:right;font-size:8.7px;letter-spacing:-0.096px;height:12.8px;line-height:12.8px;">4,83</div>
<div class="t bold" style="right:282.1px;top:560.7px;text-align:right;font-size:8.7px;letter-spacing:0.39px;height:12.8px;line-height:12.8px;color:#111">5,80</div>
<div class="t " style="right:175.1px;top:560.7px;text-align:right;font-size:8.7px;letter-spacing:-0.096px;height:12.8px;line-height:12.8px;">5,50</div>
<div class="t " style="right:66.1px;top:560.7px;text-align:right;font-size:8.7px;letter-spacing:-0.096px;height:12.8px;line-height:12.8px;">6,60</div>
<div class="b " style="left:315px;top:590.6px;width:646px;height:1px;background:#dddfe8"></div>
<div class="t " style="left:318.5px;top:577.1px;font-size:8.7px;letter-spacing:-0.183px;height:12.8px;line-height:12.8px;">900005</div>
<div class="t " style="left:417.5px;top:577.1px;font-size:8.7px;letter-spacing:-0.383px;height:12.8px;line-height:12.8px;">POROTHERM Profi 50 Hi</div>
<div class="t " style="right:359.6px;top:577.1px;text-align:right;font-size:8.7px;letter-spacing:-0.096px;height:12.8px;line-height:12.8px;">4,33</div>
<div class="t bold" style="right:282.1px;top:577.1px;text-align:right;font-size:8.7px;letter-spacing:0.39px;height:12.8px;line-height:12.8px;color:#111">5,20</div>
<div class="t " style="right:175.1px;top:577.1px;text-align:right;font-size:8.7px;letter-spacing:-0.096px;height:12.8px;line-height:12.8px;">4,90</div>
<div class="t " style="right:66.1px;top:577.1px;text-align:right;font-size:8.7px;letter-spacing:-0.096px;height:12.8px;line-height:12.8px;">5,88</div>
<div class="b " style="left:315px;top:396px;width:1px;height:202px;background:#dddfe8"></div>
<div class="b " style="left:414px;top:396px;width:1px;height:202px;background:#dddfe8"></div>
<div class="b " style="left:588.5px;top:396px;width:1px;height:202px;background:#dddfe8"></div>
<div class="b " style="left:668px;top:396px;width:1px;height:202px;background:#dddfe8"></div>
<div class="b " style="left:744.5px;top:396px;width:1px;height:202px;background:#dddfe8"></div>
<div class="b " style="left:852px;top:396px;width:1px;height:202px;background:#dddfe8"></div>
<div class="b " style="left:961px;top:396px;width:1px;height:202px;background:#dddfe8"></div>
<div class="b" style="left:305px;top:591px;width:10px;height:7px;overflow:hidden"><svg class="i" style="left:2px;top:4.6px" width="4" height="7" viewBox="0 0 4 7"><path d="M0.3 0.5 L3.4 3.5 L0.3 6.5Z" fill="#222"/></svg></div>
<div class="b" style="left:315px;top:591px;width:647px;height:7px;overflow:hidden">
<div class="b" style="left:0;top:0;width:647px;height:17px;border:1px dotted #777"></div>
<div class="t" style="left:3.5px;top:2.3px;">70004</div><div class="t" style="left:102.5px;top:2.3px;">Rožok obyčajný</div>
<div class="t" style="right:297.5px;top:2.3px;">0,08</div><div class="t bold" style="right:220.5px;top:2.3px;color:#111">0,10</div><div class="t" style="right:113px;top:2.3px;">0,10</div><div class="t" style="right:4px;top:2.3px;">0,12</div>
</div>
<div class="b " style="left:975px;top:411px;width:13px;height:187px;background:#ced4e3"></div>
<svg class="i" style="left:978.5px;top:413.5px" width="6" height="4" viewBox="0 0 6 4"><path d="M0 3.6 L3 0.2 L6 3.6Z" fill="#66728c"/></svg>
<div class="b " style="left:977.5px;top:437.5px;width:8px;height:80px;background:#9aa5b8"></div>
<div class="b " style="left:978px;top:525px;width:7px;height:1.4px;background:#6aa84f"></div>
<svg class="i" style="left:978.5px;top:589px" width="6" height="4" viewBox="0 0 6 4"><path d="M0 0 L6 0 L3.0 4Z" fill="#66728c"/></svg>
<div class="b btn" style="left:495.5px;top:620px;width:70.5px;height:23px;"></div>
<svg class="i" style="left:498px;top:625.5px" width="12" height="12" viewBox="0 0 12 12"><circle cx="6" cy="6" r="5.6" fill="#4db53f" stroke="#2f8f29" stroke-width="0.8"/><circle cx="6" cy="5" r="3.6" fill="#7fd46e" opacity="0.6"/><path d="M6.4 3.2 L3.4 6 L6.4 8.8 V7 H8.8 V5 H6.4Z" fill="#fff"/></svg>
<div class="t " style="left:521.5px;top:625.1px;font-size:8.7px;letter-spacing:-0.282px;height:12.8px;line-height:12.8px;color:#2f3b5c">Predošlý</div>
<div class="b btn" style="left:570.5px;top:620px;width:70.5px;height:23px;"></div>
<svg class="i" style="left:626.5px;top:625.5px" width="12" height="12" viewBox="0 0 12 12"><circle cx="6" cy="6" r="5.6" fill="#b9bcc4" stroke="#a3a6af" stroke-width="0.8"/><path d="M5.6 3.2 L8.6 6 L5.6 8.8 V7 H3.2 V5 H5.6Z" fill="#e1e3e8"/></svg>
<div class="t " style="left:588px;top:625.1px;font-size:8.7px;letter-spacing:-0.371px;height:12.8px;line-height:12.8px;color:#a3aabb">Ďalší</div>
<div class="b btn" style="left:646px;top:620px;width:70px;height:23px;"></div>
<svg class="i" style="left:648.5px;top:625.5px" width="13" height="13" viewBox="0 0 13 13"><rect x="0.5" y="1.5" width="11" height="11" rx="1" fill="#4a8fe0" stroke="#2f6dc0" stroke-width="0.9"/><rect x="2.4" y="2" width="5" height="4.4" fill="#e9f1fb"/><rect x="2.8" y="8" width="6.4" height="4.4" fill="#1d2a44"/><rect x="6.4" y="0" width="6.4" height="6" rx="0.8" fill="#e23b3b" stroke="#b92323" stroke-width="0.6"/><path d="M8 1.4L11.2 4.6M11.2 1.4L8 4.6" stroke="#fff" stroke-width="1.1"/></svg>
<div class="t " style="left:676.5px;top:625.1px;font-size:8.7px;letter-spacing:-0.15px;height:12.8px;line-height:12.8px;color:#2f3b5c">Uložiť</div>
<div class="b btn" style="left:721px;top:620px;width:70.5px;height:23px;"></div>
<svg class="i" style="left:724px;top:625.5px" width="12" height="12" viewBox="0 0 12 12"><rect x="0.5" y="0.5" width="11" height="11" rx="1.5" fill="#e0302d" stroke="#b11d1b" stroke-width="0.9"/><path d="M3.4 3.4L8.6 8.6M8.6 3.4L3.4 8.6" stroke="#fff" stroke-width="1.7" stroke-linecap="round"/></svg>
<div class="t " style="left:751.5px;top:625.1px;font-size:8.7px;letter-spacing:-0.077px;height:12.8px;line-height:12.8px;color:#2f3b5c">Zrušiť</div>
</div>
</body></html>
